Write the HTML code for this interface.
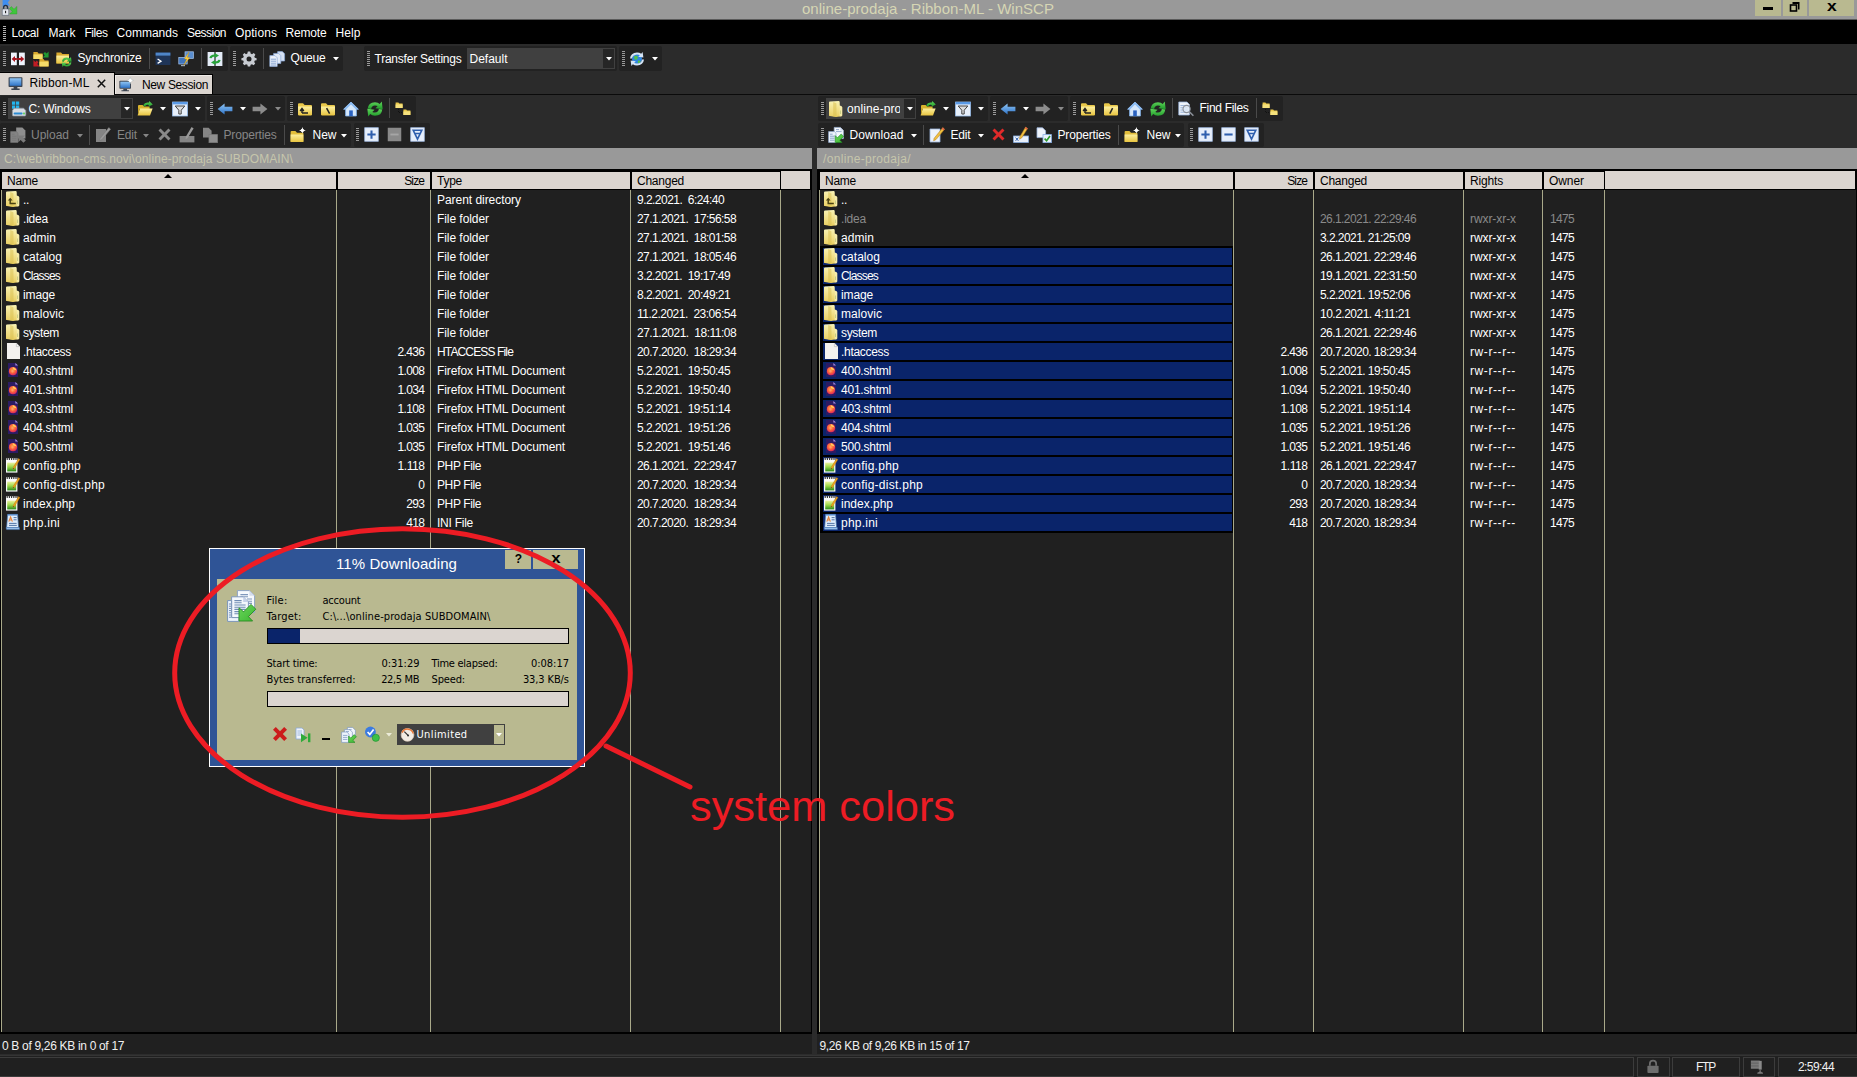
<!DOCTYPE html>
<html><head><meta charset="utf-8"><title>online-prodaja - Ribbon-ML - WinSCP</title>
<style>
html,body{margin:0;padding:0}
body{width:1857px;height:1077px;overflow:hidden;background:#2b2b2b;position:relative;font-family:"Liberation Sans",sans-serif}
body>div,body>span,body>svg{position:absolute}
.t{white-space:pre;display:block}
.ta{font-family:"DejaVu Sans Condensed","DejaVu Sans","Liberation Sans",sans-serif;font-stretch:condensed}
.i{display:block;overflow:visible}
</style></head><body>
<svg width="0" height="0" style="position:absolute"><defs><linearGradient id="gFold" x1="0" y1="0" x2="1" y2="0"><stop offset="0" stop-color="#fff6c4"/><stop offset=".55" stop-color="#f3dc7a"/><stop offset="1" stop-color="#d8b33c"/></linearGradient><linearGradient id="gFoldV" x1="0" y1="0" x2="0" y2="1"><stop offset="0" stop-color="#fdf0a0"/><stop offset="1" stop-color="#e8c440"/></linearGradient><linearGradient id="gBlue" x1="0" y1="0" x2="0" y2="1"><stop offset="0" stop-color="#8ec4f4"/><stop offset="1" stop-color="#2f74c8"/></linearGradient><linearGradient id="gGreen" x1="0" y1="0" x2="0" y2="1"><stop offset="0" stop-color="#5fd45a"/><stop offset="1" stop-color="#1f9a2a"/></linearGradient><linearGradient id="gPage" x1="0" y1="0" x2="1" y2="1"><stop offset="0" stop-color="#ffffff"/><stop offset="1" stop-color="#dfe6f0"/></linearGradient><linearGradient id="gGreenPad" x1="0" y1="0" x2="0" y2="1"><stop offset="0" stop-color="#eef4a0"/><stop offset=".5" stop-color="#9ad84a"/><stop offset="1" stop-color="#2a8a1a"/></linearGradient><linearGradient id="gFoldV2" x1="0" y1="0" x2="0" y2="1"><stop offset="0" stop-color="#f8f2b4"/><stop offset=".5" stop-color="#f1e08a"/><stop offset="1" stop-color="#e9cf62"/></linearGradient><linearGradient id="gArrow" x1="0" y1="0" x2="1" y2="1"><stop offset="0" stop-color="#6ad45a"/><stop offset="1" stop-color="#3cb832"/></linearGradient><radialGradient id="gFox" cx=".45" cy=".4" r=".6"><stop offset="0" stop-color="#ffb04a"/><stop offset=".5" stop-color="#ff6a3a"/><stop offset="1" stop-color="#d8245e"/></radialGradient></defs></svg>
<div style="left:0px;top:0px;width:1857px;height:19px;background:#999999;"></div>
<div style="left:0px;top:19px;width:1857px;height:1px;background:#5a5a5a;"></div>
<svg class="i" style="left:1.5px;top:0px;" width="16" height="16" viewBox="0 0 16 16"><path d="M.6 0 H7.8 L5.8 2.6 L7.8 5.4 H3 L.6 7Z" fill="#3f8ef0"/><path d="M7.4 8.6 L9.4 6.6 L12 9.2 L14.9 6.4 L14.9 14 L7.6 14 L10.2 11.4Z" fill="#3fc63c" stroke="#2a9a2a" stroke-width=".4"/><path d="M1.6 9.4 V7.8 Q1.6 5.4 3.6 5.4 Q5.6 5.4 5.6 7.8 V9.4" stroke="#1f2f48" stroke-width="1.4" fill="none"/><rect x=".2" y="9" width="6.6" height="6.2" fill="#e4e7ee" stroke="#5a6674" stroke-width=".6"/><rect x="3" y="10.8" width="1.1" height="2.4" fill="#222"/></svg>
<span class="t " style="top:-0.5px;font-size:15px;line-height:18px;color:#d6d6b4;letter-spacing:0.022px;left:802px;">online-prodaja - Ribbon-ML - WinSCP</span>
<div style="left:1755px;top:0px;width:26px;height:16px;background:#b9b990;"></div>
<div style="left:1783px;top:0px;width:24px;height:16px;background:#b9b990;"></div>
<div style="left:1809px;top:0px;width:45px;height:16px;background:#b9b990;"></div>
<div style="left:1763px;top:7px;width:10px;height:3px;background:#000;"></div>
<svg class="i" style="left:1789px;top:1px" width="12" height="12"><path d="M3.5 1H10.5V8.5H9V3H3.5Z" fill="#000"/><rect x="1.5" y="4" width="6" height="6" fill="none" stroke="#000" stroke-width="1.6"/></svg>
<span class="t b" style="top:-3px;font-size:14px;line-height:18px;color:#000;left:1828px;font-weight:bold;transform:scaleX(1.25);">x</span>
<div style="left:0px;top:20px;width:1857px;height:24px;background:#000;"></div>
<div style="left:3px;top:26px;width:3px;height:15px;background:repeating-linear-gradient(to bottom,#b0b0b0 0 1px,transparent 1px 2px)"></div>
<span class="t " style="top:24.5px;font-size:12px;line-height:16px;color:#ffffff;letter-spacing:-0.338px;left:11.5px;">Local</span>
<span class="t " style="top:24.5px;font-size:12px;line-height:16px;color:#ffffff;letter-spacing:0.082px;left:48.5px;">Mark</span>
<span class="t " style="top:24.5px;font-size:12px;line-height:16px;color:#ffffff;letter-spacing:-0.469px;left:84.5px;">Files</span>
<span class="t " style="top:24.5px;font-size:12px;line-height:16px;color:#ffffff;letter-spacing:0.018px;left:116.5px;">Commands</span>
<span class="t " style="top:24.5px;font-size:12px;line-height:16px;color:#ffffff;letter-spacing:-0.527px;left:187px;">Session</span>
<span class="t " style="top:24.5px;font-size:12px;line-height:16px;color:#ffffff;letter-spacing:0.094px;left:235px;">Options</span>
<span class="t " style="top:24.5px;font-size:12px;line-height:16px;color:#ffffff;letter-spacing:-0.169px;left:285.5px;">Remote</span>
<span class="t " style="top:24.5px;font-size:12px;line-height:16px;color:#ffffff;letter-spacing:0.078px;left:335.5px;">Help</span>
<div style="left:0px;top:46px;width:228px;height:25px;background:#222222;border-radius:2px;"></div>
<div style="left:230px;top:46px;width:112.5px;height:25px;background:#222222;border-radius:2px;"></div>
<div style="left:364px;top:46px;width:252.5px;height:25px;background:#222222;border-radius:2px;"></div>
<div style="left:619px;top:46px;width:43px;height:25px;background:#222222;border-radius:2px;"></div>
<div style="left:3px;top:51px;width:3px;height:15px;background:repeating-linear-gradient(to bottom,#9a9a9a 0 1px,transparent 1px 2px)"></div>
<svg class="i" style="left:10px;top:50.5px;" width="16" height="16" viewBox="0 0 16 16"><rect x="1" y="1.6" width="5.8" height="12.6" fill="#eef4fd"/><rect x="9" y="1.6" width="5.8" height="12.6" fill="#eef4fd"/><path d="M1.6 8 L5 5 V7 H6.8 V9 H5 V11Z M14.2 8 L10.8 5 V7 H9 V9 H10.8 V11Z" fill="#a8141e"/><rect x="6.8" y="7.2" width="2.2" height="1.6" fill="#a8141e"/></svg>
<svg class="i" style="left:33px;top:50.5px;" width="16" height="16" viewBox="0 0 16 16"><path d="M.4 1 H4.4 L5.6 2.4 H9.6 V8 H.4Z" fill="#d9a92e"/><path d="M.4 3.4 H9.6 V8 H.4Z" fill="#f5dc6a"/><path d="M6.4 8 H10.4 L11.6 9.4 H15.6 V15.4 H6.4Z" fill="#d9a92e"/><path d="M6.4 10.6 H15.6 V15.4 H6.4Z" fill="#f5dc6a"/><path d="M10.4 2.6 L12 1 L13.6 2.6 L15.6 .6 V6.6 H9.6 L11.8 4.4Z" fill="#1f9a32"/><path d="M5.4 11.2 L3.8 9.6 L2.4 11 L.4 9 V15.4 H6.6 L4.2 13Z" fill="#c01c24"/></svg>
<svg class="i" style="left:56px;top:50.5px;" width="16" height="16" viewBox="0 0 16 16"><path d="M.4 1.4 H5 L6.4 3 H13 V12.4 H.4Z" fill="#d9a92e"/><path d="M.4 4.6 H13 V12.4 H.4Z" fill="url(#gFoldV)"/><path d="M6 10.6 Q6.4 6.8 10.6 6.6 Q12.6 6.6 13.6 7.6 L15 6 L15.6 10.8 L10.8 10.4 L12.2 9 Q11.6 8.4 10.6 8.4 Q8.2 8.6 7.8 10.8Z" fill="url(#gGreen)"/><path d="M15.4 11.4 Q14.8 15.4 10.8 15.6 Q8.8 15.6 7.8 14.6 L6.4 16 L5.8 11.4 L10.6 11.8 L9.2 13.2 Q9.8 13.8 10.8 13.8 Q13.2 13.6 13.6 11.4Z" fill="url(#gGreen)"/></svg>
<span class="t " style="top:50px;font-size:12px;line-height:16px;color:#fff;letter-spacing:-0.185px;left:77.5px;">Synchronize</span>
<div style="left:149px;top:48px;width:1px;height:21px;background:#4a4a4a;"></div>
<svg class="i" style="left:155px;top:50.5px;" width="16" height="16" viewBox="0 0 16 16"><rect x=".6" y="1.6" width="14.8" height="12.4" fill="#1f3558"/><rect x=".6" y="1.6" width="14.8" height="3" fill="#4f86c8"/><path d="M2.6 8 L6 10.2 L2.6 12.4" stroke="#fff" stroke-width="1.3" fill="none"/></svg>
<svg class="i" style="left:178px;top:50.5px;" width="16" height="16" viewBox="0 0 16 16"><rect x="7" y=".8" width="8.4" height="6.6" fill="#5a8ed0" stroke="#a8c8f0" stroke-width=".7"/><rect x=".8" y="6.4" width="8.4" height="6.6" fill="#3f74bc" stroke="#a8c8f0" stroke-width=".7"/><path d="M3 14.6 H7" stroke="#9ab" stroke-width="1.2"/><path d="M11 1 L6.4 8 H8.8 L5.6 14.4 L11.8 6.6 H9.2Z" fill="#ffd23a" stroke="#c88a10" stroke-width=".4"/></svg>
<div style="left:201px;top:48px;width:1px;height:21px;background:#4a4a4a;"></div>
<svg class="i" style="left:207px;top:50.5px;" width="16" height="16" viewBox="0 0 16 16"><rect x=".6" y="1" width="14.8" height="14" fill="#e4ecf8"/><rect x="7.4" y="1" width="1.2" height="14" fill="#2c2c2c"/><path d="M2.4 7 Q3 3.4 7.6 3.4 L7.4 2 L12 4.4 L8 7 L7.8 5.4 Q5 5.4 4.6 7.2Z" fill="#27a43a"/><path d="M13.6 9 Q13 12.6 8.4 12.6 L8.6 14 L4 11.6 L8 9 L8.2 10.6 Q11 10.6 11.4 8.8Z" fill="#27a43a"/></svg>
<div style="left:233px;top:51px;width:3px;height:15px;background:repeating-linear-gradient(to bottom,#9a9a9a 0 1px,transparent 1px 2px)"></div>
<svg class="i" style="left:240.5px;top:50.5px;" width="16" height="16" viewBox="0 0 16 16"><path d="M6.8 .6 H9.2 L9.6 2.6 L11 3.2 L12.8 2.1 L14.4 3.8 L13.3 5.4 L13.8 6.8 L15.6 7.2 V9.2 L13.8 9.6 L13.2 11 L14.2 12.6 L12.6 14.2 L11 13.2 L9.6 13.8 L9.2 15.6 H6.8 L6.4 13.8 L5 13.2 L3.4 14.2 L1.8 12.6 L2.8 11 L2.2 9.6 L.4 9.2 V7.2 L2.2 6.8 L2.8 5.4 L1.8 3.8 L3.4 2.1 L5 3.2 L6.4 2.6Z" fill="#c8ccd2"/><circle cx="8" cy="8.1" r="2.5" fill="#232323"/></svg>
<div style="left:263px;top:48px;width:1px;height:21px;background:#4a4a4a;"></div>
<svg class="i" style="left:269px;top:50.5px;" width="16" height="16" viewBox="0 0 16 16"><path d="M8.6 .6 H13.4 L15.6 2.8 V10 H8.6Z" fill="#d6e2f4" stroke="#8aa8d8" stroke-width=".7"/><path d="M4.6 2.4 H9.6 L11.8 4.6 V12.4 H4.6Z" fill="#e2ebf8" stroke="#8aa8d8" stroke-width=".7"/><path d="M.8 4.6 H6 L8.2 6.8 V15.4 H.8Z" fill="#eef3fb" stroke="#8aa8d8" stroke-width=".7"/><path d="M2 8.2 H7 M2 10.2 H7 M2 12.2 H7 M2 14 H7" stroke="#7a9ccc" stroke-width=".9"/></svg>
<span class="t " style="top:50px;font-size:12px;line-height:16px;color:#fff;letter-spacing:-0.203px;left:290.5px;">Queue</span>
<svg class="i" style="left:332.5px;top:56.8px" width="6" height="3.4"><path d="M0 0H6L3 3.4Z" fill="#fff"/></svg>
<div style="left:367px;top:51px;width:3px;height:15px;background:repeating-linear-gradient(to bottom,#9a9a9a 0 1px,transparent 1px 2px)"></div>
<span class="t " style="top:50.5px;font-size:12px;line-height:16px;color:#fff;letter-spacing:-0.230px;left:374.5px;">Transfer Settings</span>
<div style="left:467px;top:48px;width:148px;height:21px;background:#404040;"></div>
<div style="left:603px;top:49px;width:11px;height:19px;background:#262626;"></div>
<span class="t " style="top:50.5px;font-size:12px;line-height:16px;color:#fff;left:469.5px;">Default</span>
<svg class="i" style="left:605.5px;top:56.8px" width="6" height="3.4"><path d="M0 0H6L3 3.4Z" fill="#fff"/></svg>
<div style="left:622px;top:51px;width:3px;height:15px;background:repeating-linear-gradient(to bottom,#9a9a9a 0 1px,transparent 1px 2px)"></div>
<svg class="i" style="left:629px;top:50.5px;" width="16" height="16" viewBox="0 0 16 16"><circle cx="8" cy="8" r="5" fill="#2f86e0"/><path d="M5 5.4 Q7 4 8.6 5.4 Q9.4 7 8 8.2 Q6.4 9.4 5.4 8 Z M9 9.6 Q11 9 11.6 10.4 Q10.4 12.4 8.8 12Z" fill="#52c24a"/><path d="M1 7.4 Q1.6 1.8 8 1.4 Q10.6 1.4 12.2 2.8 L13.6 1 L14.4 6.4 L9.2 5.8 L10.8 4.2 Q9.6 3.4 8 3.4 Q3.6 3.8 3 7.6Z" fill="#d4e4f6"/><path d="M15 8.6 Q14.4 14.2 8 14.6 Q5.4 14.6 3.8 13.2 L2.4 15 L1.6 9.6 L6.8 10.2 L5.2 11.8 Q6.4 12.6 8 12.6 Q12.4 12.2 13 8.4Z" fill="#d4e4f6"/></svg>
<svg class="i" style="left:651.5px;top:56.8px" width="6" height="3.4"><path d="M0 0H6L3 3.4Z" fill="#fff"/></svg>
<div style="left:0px;top:72px;width:115px;height:23px;background:#000;"></div>
<div style="left:0px;top:73px;width:114px;height:22px;background:#dbd5d0;"></div>
<div style="left:115px;top:74px;width:98px;height:20px;background:#000;"></div>
<div style="left:115px;top:75px;width:97px;height:19px;background:#dbd5d0;box-shadow:inset 1px 1px 0 #efebe8;"></div>
<div style="left:114px;top:94px;width:1743px;height:1px;background:#0a0a0a;"></div>
<svg class="i" style="left:8px;top:76px;" width="15" height="15" viewBox="0 0 16 16"><rect x=".6" y="1.2" width="14.8" height="10.4" rx=".8" fill="#3c4450"/><rect x="1.8" y="2.4" width="12.4" height="8" fill="url(#gBlue)"/><path d="M6 11.6 H10 V13.4 H12.4 V14.8 H3.6 V13.4 H6Z" fill="#3c4450"/></svg>
<span class="t " style="top:75px;font-size:12px;line-height:16px;color:#000;letter-spacing:0.144px;left:29.5px;">Ribbon-ML</span>
<svg class="i" style="left:97px;top:79px" width="9" height="9"><path d="M.8 .8L8.2 8.2M8.2 .8L.8 8.2" stroke="#111" stroke-width="1.5"/></svg>
<svg class="i" style="left:119px;top:77px;" width="15" height="15" viewBox="0 0 16 16"><rect x=".4" y="4" width="12.4" height="8.6" rx=".8" fill="#3c4450"/><rect x="1.4" y="5" width="10.4" height="6.6" fill="url(#gBlue)"/><path d="M4.6 12.6 H8.6 V14 H10.6 V15.2 H2.6 V14 H4.6Z" fill="#3c4450"/><path d="M12 0 L12.9 2.6 L15.8 3.6 L12.9 4.6 L12 7.4 L11.1 4.6 L8.2 3.6 L11.1 2.6Z" fill="#f4f6f8" stroke="#9aa" stroke-width=".3"/><circle cx="12" cy="3.7" r="1.7" fill="#fff"/></svg>
<span class="t " style="top:76.5px;font-size:12px;line-height:16px;color:#000;letter-spacing:-0.366px;left:142px;">New Session</span>
<div style="left:0px;top:96px;width:205px;height:24.5px;background:#222222;border-radius:2px;"></div>
<div style="left:207px;top:96px;width:77.5px;height:24.5px;background:#222222;border-radius:2px;"></div>
<div style="left:287px;top:96px;width:129px;height:24.5px;background:#222222;border-radius:2px;"></div>
<div style="left:3px;top:101.5px;width:3px;height:14px;background:repeating-linear-gradient(to bottom,#9a9a9a 0 1px,transparent 1px 2px)"></div>
<div style="left:8px;top:98px;width:124.5px;height:20.5px;background:#404040;"></div>
<div style="left:121px;top:99px;width:10.5px;height:18.5px;background:#262626;"></div>
<svg class="i" style="left:10.5px;top:100.5px;" width="16" height="16" viewBox="0 0 16 16"><path d="M1 .6 H4.2 V3.8 H1Z M5 .6 H8.2 V3.8 H5Z M1 4.6 H4.2 V7.8 H1Z M5 4.6 H8.2 V7.8 H5Z" fill="#22b4ee"/><path d="M1.4 9.6 L3 7.2 H12.6 L14.8 9.6 V14 Q14.8 15 13.8 15 H2.4 Q1.4 15 1.4 14Z" fill="#d8dde4" stroke="#8a939e" stroke-width=".7"/><rect x="2.6" y="11.4" width="9" height="2.2" rx="1" fill="#2a8ad0"/><rect x="12.2" y="11.6" width="1.6" height="1.8" fill="#4fd24a"/></svg>
<span class="t " style="top:101px;font-size:12px;line-height:16px;color:#fff;letter-spacing:-0.202px;left:28.5px;">C: Windows</span>
<svg class="i" style="left:123.5px;top:106.8px" width="6" height="3.4"><path d="M0 0H6L3 3.4Z" fill="#fff"/></svg>
<svg class="i" style="left:137px;top:100.5px;" width="16" height="16" viewBox="0 0 16 16"><path d="M1 5 Q1 4 2 4 H5.6 L7 5.6 H12.6 V8 H1Z" fill="#d9b42e"/><path d="M.6 14.4 L2.8 7.4 H15.6 L13 14.4Z" fill="url(#gFoldV)"/><path d="M1 7 V14 L2.8 7.4Z" fill="#c9a426"/><path d="M6 4.4 Q8 .6 12 1.6 L12.2 0 L15.8 3.4 L11.6 5.8 L11.8 4 Q9 3.2 8 5.4Z" fill="url(#gGreen)"/></svg>
<svg class="i" style="left:159.5px;top:106.8px" width="6" height="3.4"><path d="M0 0H6L3 3.4Z" fill="#fff"/></svg>
<svg class="i" style="left:172px;top:100.5px;" width="16" height="16" viewBox="0 0 16 16"><rect x=".6" y="1" width="14.8" height="14" fill="#e8f0fb" stroke="#9cc0ee" stroke-width=".8"/><rect x=".6" y="1" width="14.8" height="2.4" fill="#5a9ae6"/><path d="M3.2 5 H12.8 L9.2 9.2 V13 L6.8 13 V9.2Z" fill="#dcdcdc" stroke="#444" stroke-width="1"/></svg>
<svg class="i" style="left:194.5px;top:106.8px" width="6" height="3.4"><path d="M0 0H6L3 3.4Z" fill="#fff"/></svg>
<div style="left:210px;top:101.5px;width:3px;height:14px;background:repeating-linear-gradient(to bottom,#9a9a9a 0 1px,transparent 1px 2px)"></div>
<svg class="i" style="left:217px;top:100.5px;" width="16" height="16" viewBox="0 0 16 16"><path d="M.6 8 L7.6 2.4 V5.8 H15.4 V10.2 H7.6 V13.6Z" fill="url(#gBlue)"/></svg>
<svg class="i" style="left:239.5px;top:106.8px" width="6" height="3.4"><path d="M0 0H6L3 3.4Z" fill="#fff"/></svg>
<svg class="i" style="left:252px;top:100.5px;" width="16" height="16" viewBox="0 0 16 16"><path d="M15.4 8 L8.4 2.4 V5.8 H.6 V10.2 H8.4 V13.6Z" fill="#8c8c8c"/></svg>
<svg class="i" style="left:274.5px;top:106.8px" width="6" height="3.4"><path d="M0 0H6L3 3.4Z" fill="#8a8a8a"/></svg>
<div style="left:290px;top:101.5px;width:3px;height:14px;background:repeating-linear-gradient(to bottom,#9a9a9a 0 1px,transparent 1px 2px)"></div>
<svg class="i" style="left:297px;top:100.5px;" width="16" height="16" viewBox="0 0 16 16"><path d="M1 3.2 Q1 2.2 2 2.2 H6 L7.6 4 H14 Q15 4 15 5 V13.5 H1Z" fill="#e9c84a"/><path d="M1 5.6 H15 V13.6 Q15 14.4 14.2 14.4 H1.8 Q1 14.4 1 13.6Z" fill="url(#gFoldV)"/><path d="M5 12 H11 M5 12 V8.4 M3.2 10 L5 7.6 L6.8 10" stroke="#222" stroke-width="1.5" fill="none"/></svg>
<svg class="i" style="left:320px;top:100.5px;" width="16" height="16" viewBox="0 0 16 16"><path d="M1 3.2 Q1 2.2 2 2.2 H6 L7.6 4 H14 Q15 4 15 5 V13.5 H1Z" fill="#e9c84a"/><path d="M1 5.6 H15 V13.6 Q15 14.4 14.2 14.4 H1.8 Q1 14.4 1 13.6Z" fill="url(#gFoldV)"/><path d="M6.6 7.2 L9.6 12.6" stroke="#222" stroke-width="1.5"/></svg>
<svg class="i" style="left:343px;top:100.5px;" width="16" height="16" viewBox="0 0 16 16"><path d="M8 1 L15.4 8.2 H13.4 V15 H2.6 V8.2 H.6Z" fill="#d6e8fb" stroke="#7fb0ea" stroke-width=".8"/><path d="M8 1 L15.4 8.2 H12.8 L8 3.6 L3.2 8.2 H.6Z" fill="#8cbcf2"/><rect x="6.2" y="9.4" width="3.6" height="5.6" fill="#2a62c0"/></svg>
<svg class="i" style="left:367px;top:100.5px;" width="16" height="16" viewBox="0 0 16 16"><g transform="translate(8 8) scale(1.13) translate(-8 -8)"><path d="M1.6 7.6 Q2 2.2 8 2 Q10.8 2 12.2 3.6 L14 1.4 L14.8 8.2 L8.4 7.4 L10.4 5.4 Q9.4 4.8 8 4.8 Q5 5 4.6 8Z" fill="url(#gGreen)"/><path d="M14.4 8.4 Q14 13.8 8 14 Q5.2 14 3.8 12.4 L2 14.6 L1.2 7.8 L7.6 8.6 L5.6 10.6 Q6.6 11.2 8 11.2 Q11 11 11.4 8Z" fill="url(#gGreen)"/></g></svg>
<div style="left:389px;top:98px;width:1px;height:20px;background:#4a4a4a;"></div>
<svg class="i" style="left:395px;top:100.5px;" width="16" height="16" viewBox="0 0 16 16"><path d="M3.5 6 V11.5 H8" stroke="#111" stroke-width="1" stroke-dasharray="1 1" fill="none"/><path d="M.6 1.6 H3.4 L4.2 2.6 H7.6 V7 H.6Z" fill="#ecc94a"/><path d="M.6 3.4 H7.6 V7 H.6Z" fill="#f6e27e"/><path d="M8.4 8.6 H11.2 L12 9.6 H15.4 V14 H8.4Z" fill="#ecc94a"/><path d="M8.4 10.4 H15.4 V14 H8.4Z" fill="#f6e27e"/></svg>
<div style="left:0px;top:123px;width:350.5px;height:24px;background:#222222;border-radius:2px;"></div>
<div style="left:353.5px;top:123px;width:76.5px;height:24px;background:#222222;border-radius:2px;"></div>
<div style="left:3px;top:127.5px;width:3px;height:14px;background:repeating-linear-gradient(to bottom,#9a9a9a 0 1px,transparent 1px 2px)"></div>
<svg class="i" style="left:10px;top:127px;" width="16" height="16" viewBox="0 0 16 16"><path d="M6.2 .4 H12.4 L15.4 3.4 V11.6 H6.2Z" fill="#8e8e8e"/><path d="M.6 4.6 H6.4 L8 6.2 V15.4 H.6Z" fill="#848484" stroke="#747474" stroke-width=".6"/><path d="M2 7.2 H4.6 M2 9.2 H6.6 M2 11.2 H6.6 M2 13.2 H6.6" stroke="#767676" stroke-width=".9"/><path d="M8.4 15.2 V8.4 H15.2 L13 10.6 L15.8 13.4 L13.4 15.8 L10.6 13Z" fill="#7c7c7c"/></svg>
<span class="t " style="top:127px;font-size:12px;line-height:16px;color:#868686;letter-spacing:-0.005px;left:31px;">Upload</span>
<svg class="i" style="left:76.5px;top:133.8px" width="6" height="3.4"><path d="M0 0H6L3 3.4Z" fill="#868686"/></svg>
<div style="left:89px;top:125px;width:1px;height:20px;background:#4a4a4a;"></div>
<svg class="i" style="left:95px;top:127px;" width="16" height="16" viewBox="0 0 16 16"><path d="M1 2 H11 V15 H1Z" fill="#858585"/><path d="M13.8 .6 L15.6 2.2 L7 12.6 L4.6 13.8 L5.2 11.2Z" fill="#9a9a9a" stroke="#777" stroke-width=".5"/></svg>
<span class="t " style="top:127px;font-size:12px;line-height:16px;color:#868686;letter-spacing:-0.168px;left:117px;">Edit</span>
<svg class="i" style="left:143px;top:133.8px" width="6" height="3.4"><path d="M0 0H6L3 3.4Z" fill="#868686"/></svg>
<svg class="i" style="left:156.5px;top:127px;" width="15" height="15" viewBox="0 0 16 16"><path d="M1.6 3.8 L3.8 1.6 L8 5.8 L12.2 1.6 L14.4 3.8 L10.2 8 L14.4 12.2 L12.2 14.4 L8 10.2 L3.8 14.4 L1.6 12.2 L5.8 8Z" fill="#8a8a8a"/></svg>
<svg class="i" style="left:179px;top:127px;" width="16" height="16" viewBox="0 0 16 16"><rect x=".6" y="9" width="14.8" height="6.4" fill="#858585"/><path d="M12.6 0 L14.6 1.6 L8.6 11 L6.6 12.2 L6.8 9.8Z" fill="#9a9a9a"/></svg>
<svg class="i" style="left:202px;top:127px;" width="16" height="16" viewBox="0 0 16 16"><path d="M1 .8 H6.6 L9.6 3.8 V10.6 H1Z" fill="#858585"/><rect x="7" y="7.6" width="8.4" height="8" fill="#8f8f8f" stroke="#7a7a7a" stroke-width=".8"/></svg>
<span class="t " style="top:127px;font-size:12px;line-height:16px;color:#868686;letter-spacing:-0.169px;left:223.5px;">Properties</span>
<div style="left:284px;top:125px;width:1px;height:20px;background:#4a4a4a;"></div>
<svg class="i" style="left:290px;top:127px;" width="16" height="16" viewBox="0 0 16 16"><path d="M.6 5 Q.6 4 1.6 4 H5.4 L7 5.8 H13.4 V15 H.6Z" fill="#e2bd3a"/><path d="M.6 7.4 H13.4 V14.2 Q13.4 15 12.6 15 H1.4 Q.6 15 .6 14.2Z" fill="url(#gFoldV)"/><path d="M12.4 0 L13.2 2.6 L15.8 3.4 L13.2 4.2 L12.4 6.8 L11.6 4.2 L9 3.4 L11.6 2.6Z" fill="#ffffff"/><circle cx="12.4" cy="3.4" r="1.6" fill="#fff"/></svg>
<span class="t " style="top:127px;font-size:12px;line-height:16px;color:#fff;letter-spacing:-0.005px;left:312.5px;">New</span>
<svg class="i" style="left:340.5px;top:133.8px" width="6" height="3.4"><path d="M0 0H6L3 3.4Z" fill="#fff"/></svg>
<div style="left:356px;top:127.5px;width:3px;height:14px;background:repeating-linear-gradient(to bottom,#9a9a9a 0 1px,transparent 1px 2px)"></div>
<svg class="i" style="left:363.5px;top:127px;" width="15" height="15" viewBox="0 0 16 16"><rect x=".8" y=".8" width="14.4" height="14.4" fill="#e6eefb" stroke="#a8c4ee" stroke-width=".8"/><path d="M8 3.6 V12.4 M3.6 8 H12.4" stroke="#2f5fae" stroke-width="2.2"/></svg>
<svg class="i" style="left:386.5px;top:127px;" width="15" height="15" viewBox="0 0 16 16"><rect x=".8" y=".8" width="14.4" height="14.4" fill="#8a8a8a"/><path d="M3.6 8 H12.4" stroke="#a6a6a6" stroke-width="2"/></svg>
<svg class="i" style="left:409.5px;top:127px;" width="15" height="15" viewBox="0 0 16 16"><rect x=".8" y=".8" width="14.4" height="14.4" fill="#e6eefb" stroke="#a8c4ee" stroke-width=".8"/><path d="M3.4 3.4 H12.6 L8 13Z M5.4 7 H10.6" fill="none" stroke="#2f5fae" stroke-width="1.7"/></svg>
<div style="left:818px;top:96px;width:169.5px;height:24.5px;background:#222222;border-radius:2px;"></div>
<div style="left:990px;top:96px;width:77.5px;height:24.5px;background:#222222;border-radius:2px;"></div>
<div style="left:1070px;top:96px;width:212.5px;height:24.5px;background:#222222;border-radius:2px;"></div>
<div style="left:821px;top:101.5px;width:3px;height:14px;background:repeating-linear-gradient(to bottom,#9a9a9a 0 1px,transparent 1px 2px)"></div>
<div style="left:826px;top:98px;width:90px;height:20.5px;background:#404040;"></div>
<div style="left:904px;top:99px;width:11px;height:18.5px;background:#262626;"></div>
<svg class="i" style="left:828px;top:100.5px;" width="16" height="16" viewBox="0 0 16 16"><path d="M1 1.6 Q1 .6 2 .5 L10.6 .1 Q11.7 .1 11.7 1.2 L11.8 4.6 L13.7 5.5 Q14.2 5.8 14.2 6.6 L14.2 14.2 Q14.2 15 13.4 15.2 L8 16 L1.8 15.1 Q1 15 1 14.2 Z" fill="url(#gFoldV2)"/><path d="M5.2 1 L8.4 2.2 L8.6 15.9 L8 16 L5.2 15.6Z" fill="#d9c050" opacity=".55"/><path d="M11.8 4.6 L13.7 5.5 Q14.2 5.8 14.2 6.6 L14.2 14.2 Q14.2 15 13.4 15.2 L11.6 15.5Z" fill="#f7efb4" opacity=".8"/><path d="M12.4 9.5 V13" stroke="#7aa04a" stroke-width=".6" opacity=".7"/></svg>
<span class="t" style="left:847px;top:101px;width:53px;overflow:hidden;font-size:12px;line-height:16px;color:#fff;letter-spacing:.1px">online-prodaja</span>
<svg class="i" style="left:906.5px;top:106.8px" width="6" height="3.4"><path d="M0 0H6L3 3.4Z" fill="#fff"/></svg>
<svg class="i" style="left:920px;top:100.5px;" width="16" height="16" viewBox="0 0 16 16"><path d="M1 5 Q1 4 2 4 H5.6 L7 5.6 H12.6 V8 H1Z" fill="#d9b42e"/><path d="M.6 14.4 L2.8 7.4 H15.6 L13 14.4Z" fill="url(#gFoldV)"/><path d="M1 7 V14 L2.8 7.4Z" fill="#c9a426"/><path d="M6 4.4 Q8 .6 12 1.6 L12.2 0 L15.8 3.4 L11.6 5.8 L11.8 4 Q9 3.2 8 5.4Z" fill="url(#gGreen)"/></svg>
<svg class="i" style="left:942.5px;top:106.8px" width="6" height="3.4"><path d="M0 0H6L3 3.4Z" fill="#fff"/></svg>
<svg class="i" style="left:955px;top:100.5px;" width="16" height="16" viewBox="0 0 16 16"><rect x=".6" y="1" width="14.8" height="14" fill="#e8f0fb" stroke="#9cc0ee" stroke-width=".8"/><rect x=".6" y="1" width="14.8" height="2.4" fill="#5a9ae6"/><path d="M3.2 5 H12.8 L9.2 9.2 V13 L6.8 13 V9.2Z" fill="#dcdcdc" stroke="#444" stroke-width="1"/></svg>
<svg class="i" style="left:977.5px;top:106.8px" width="6" height="3.4"><path d="M0 0H6L3 3.4Z" fill="#fff"/></svg>
<div style="left:993px;top:101.5px;width:3px;height:14px;background:repeating-linear-gradient(to bottom,#9a9a9a 0 1px,transparent 1px 2px)"></div>
<svg class="i" style="left:1000px;top:100.5px;" width="16" height="16" viewBox="0 0 16 16"><path d="M.6 8 L7.6 2.4 V5.8 H15.4 V10.2 H7.6 V13.6Z" fill="url(#gBlue)"/></svg>
<svg class="i" style="left:1022.5px;top:106.8px" width="6" height="3.4"><path d="M0 0H6L3 3.4Z" fill="#fff"/></svg>
<svg class="i" style="left:1035px;top:100.5px;" width="16" height="16" viewBox="0 0 16 16"><path d="M15.4 8 L8.4 2.4 V5.8 H.6 V10.2 H8.4 V13.6Z" fill="#8c8c8c"/></svg>
<svg class="i" style="left:1057.5px;top:106.8px" width="6" height="3.4"><path d="M0 0H6L3 3.4Z" fill="#8a8a8a"/></svg>
<div style="left:1073px;top:101.5px;width:3px;height:14px;background:repeating-linear-gradient(to bottom,#9a9a9a 0 1px,transparent 1px 2px)"></div>
<svg class="i" style="left:1080px;top:100.5px;" width="16" height="16" viewBox="0 0 16 16"><path d="M1 3.2 Q1 2.2 2 2.2 H6 L7.6 4 H14 Q15 4 15 5 V13.5 H1Z" fill="#e9c84a"/><path d="M1 5.6 H15 V13.6 Q15 14.4 14.2 14.4 H1.8 Q1 14.4 1 13.6Z" fill="url(#gFoldV)"/><path d="M5 12 H11 M5 12 V8.4 M3.2 10 L5 7.6 L6.8 10" stroke="#222" stroke-width="1.5" fill="none"/></svg>
<svg class="i" style="left:1103px;top:100.5px;" width="16" height="16" viewBox="0 0 16 16"><path d="M1 3.2 Q1 2.2 2 2.2 H6 L7.6 4 H14 Q15 4 15 5 V13.5 H1Z" fill="#e9c84a"/><path d="M1 5.6 H15 V13.6 Q15 14.4 14.2 14.4 H1.8 Q1 14.4 1 13.6Z" fill="url(#gFoldV)"/><path d="M9.6 7.2 L6.8 12.6" stroke="#222" stroke-width="1.5"/></svg>
<svg class="i" style="left:1126.5px;top:100.5px;" width="16" height="16" viewBox="0 0 16 16"><path d="M8 1 L15.4 8.2 H13.4 V15 H2.6 V8.2 H.6Z" fill="#d6e8fb" stroke="#7fb0ea" stroke-width=".8"/><path d="M8 1 L15.4 8.2 H12.8 L8 3.6 L3.2 8.2 H.6Z" fill="#8cbcf2"/><rect x="6.2" y="9.4" width="3.6" height="5.6" fill="#2a62c0"/></svg>
<svg class="i" style="left:1150px;top:100.5px;" width="16" height="16" viewBox="0 0 16 16"><g transform="translate(8 8) scale(1.13) translate(-8 -8)"><path d="M1.6 7.6 Q2 2.2 8 2 Q10.8 2 12.2 3.6 L14 1.4 L14.8 8.2 L8.4 7.4 L10.4 5.4 Q9.4 4.8 8 4.8 Q5 5 4.6 8Z" fill="url(#gGreen)"/><path d="M14.4 8.4 Q14 13.8 8 14 Q5.2 14 3.8 12.4 L2 14.6 L1.2 7.8 L7.6 8.6 L5.6 10.6 Q6.6 11.2 8 11.2 Q11 11 11.4 8Z" fill="url(#gGreen)"/></g></svg>
<div style="left:1172px;top:98px;width:1px;height:20px;background:#4a4a4a;"></div>
<svg class="i" style="left:1178px;top:100.5px;" width="16" height="16" viewBox="0 0 16 16"><path d="M.8 1 H9 L11.4 3.4 V14 H.8Z" fill="#eef3fb" stroke="#9ab4dc" stroke-width=".8"/><path d="M2.4 4.6 H9.6 M2.4 6.8 H9.6 M2.4 9 H9.6 M2.4 11.2 H8" stroke="#8aa8d4" stroke-width=".9"/><circle cx="8.6" cy="8" r="3.6" fill="#dfeaf8" fill-opacity=".8" stroke="#8a8f98" stroke-width="1.1"/><path d="M11.4 10.8 L15.4 14.8" stroke="#8a8f98" stroke-width="1.6"/></svg>
<span class="t " style="top:100px;font-size:12px;line-height:16px;color:#fff;letter-spacing:-0.302px;left:1199.5px;">Find Files</span>
<div style="left:1256px;top:98px;width:1px;height:20px;background:#4a4a4a;"></div>
<svg class="i" style="left:1262px;top:100.5px;" width="16" height="16" viewBox="0 0 16 16"><path d="M3.5 6 V11.5 H8" stroke="#111" stroke-width="1" stroke-dasharray="1 1" fill="none"/><path d="M.6 1.6 H3.4 L4.2 2.6 H7.6 V7 H.6Z" fill="#ecc94a"/><path d="M.6 3.4 H7.6 V7 H.6Z" fill="#f6e27e"/><path d="M8.4 8.6 H11.2 L12 9.6 H15.4 V14 H8.4Z" fill="#ecc94a"/><path d="M8.4 10.4 H15.4 V14 H8.4Z" fill="#f6e27e"/></svg>
<div style="left:818px;top:123px;width:366px;height:24px;background:#222222;border-radius:2px;"></div>
<div style="left:1187.5px;top:123px;width:76.5px;height:24px;background:#222222;border-radius:2px;"></div>
<div style="left:821px;top:127.5px;width:3px;height:14px;background:repeating-linear-gradient(to bottom,#9a9a9a 0 1px,transparent 1px 2px)"></div>
<svg class="i" style="left:828px;top:127px;" width="16" height="16" viewBox="0 0 16 16"><path d="M6.2 .4 H12.4 L15.4 3.4 V11.6 H6.2Z" fill="#f4f8fd" stroke="#a4b8d8" stroke-width=".7"/><path d="M12.4 .4 V3.4 H15.4Z" fill="#cfd9ec"/><path d="M8 2.6 H11 M8 4.6 H13.6" stroke="#8aa2c8" stroke-width=".9"/><path d="M.6 4.6 H6.4 L8 6.2 V15.4 H.6Z" fill="#eef4fc" stroke="#8ea6cc" stroke-width=".7"/><path d="M2 7.2 H4.6 M2 9.2 H6.6 M2 11.2 H6.6 M2 13.2 H6.6" stroke="#7f9ac4" stroke-width=".9"/><path d="M7.2 8.6 L7.2 15.4 L14 15.4 L11.8 13.2 L15.6 9.4 L13.2 7 L9.4 10.8Z" fill="url(#gArrow)" stroke="#1f8a22" stroke-width=".6" stroke-linejoin="round"/></svg>
<span class="t " style="top:127px;font-size:12px;line-height:16px;color:#fff;letter-spacing:0.078px;left:849.5px;">Download</span>
<svg class="i" style="left:910.5px;top:133.8px" width="6" height="3.4"><path d="M0 0H6L3 3.4Z" fill="#fff"/></svg>
<div style="left:923px;top:125px;width:1px;height:20px;background:#4a4a4a;"></div>
<svg class="i" style="left:928.5px;top:127px;" width="16" height="16" viewBox="0 0 16 16"><path d="M1 2 H11 V15 H1Z" fill="#eef3fb" stroke="#9ab4dc" stroke-width=".8"/><path d="M13.8 .6 L15.6 2.2 L7 12.6 L4.6 13.8 L5.2 11.2Z" fill="#f0c040" stroke="#b07818" stroke-width=".5"/><path d="M13.8 .6 L15.6 2.2 L14.6 3.4 L12.8 1.8Z" fill="#e0584a"/></svg>
<span class="t " style="top:127px;font-size:12px;line-height:16px;color:#fff;letter-spacing:-0.168px;left:950.5px;">Edit</span>
<svg class="i" style="left:977.5px;top:133.8px" width="6" height="3.4"><path d="M0 0H6L3 3.4Z" fill="#fff"/></svg>
<svg class="i" style="left:990.5px;top:127px;" width="15" height="15" viewBox="0 0 16 16"><path d="M1.6 3.8 L3.8 1.6 L8 5.8 L12.2 1.6 L14.4 3.8 L10.2 8 L14.4 12.2 L12.2 14.4 L8 10.2 L3.8 14.4 L1.6 12.2 L5.8 8Z" fill="#e02a2a"/></svg>
<svg class="i" style="left:1013px;top:127px;" width="16" height="16" viewBox="0 0 16 16"><rect x=".6" y="9" width="14.8" height="6.4" fill="#e8f0fb" stroke="#8ab0e4" stroke-width=".8"/><path d="M2.6 10.6 L5.4 13.8 M5.4 10.6 L2.6 13.8" stroke="#2f5fae" stroke-width="1"/><path d="M12.6 0 L14.6 1.6 L8.6 11 L6.6 12.2 L6.8 9.8Z" fill="#f0c040" stroke="#b07818" stroke-width=".5"/><path d="M12.6 0 L14.6 1.6 L13.8 2.8 L11.8 1.2Z" fill="#e0584a"/></svg>
<svg class="i" style="left:1036px;top:127px;" width="16" height="16" viewBox="0 0 16 16"><path d="M1 .8 H6.6 L9.6 3.8 V10.6 H1Z" fill="#eef3fb" stroke="#9ab4dc" stroke-width=".8"/><rect x="7" y="7.6" width="8.4" height="8" fill="#e8f0fb" stroke="#8ab0e4" stroke-width=".8"/><path d="M8.6 11.6 L10.6 13.8 L14 9" stroke="#2c9a2c" stroke-width="1.6" fill="none"/></svg>
<span class="t " style="top:127px;font-size:12px;line-height:16px;color:#fff;letter-spacing:-0.169px;left:1057.5px;">Properties</span>
<div style="left:1118px;top:125px;width:1px;height:20px;background:#4a4a4a;"></div>
<svg class="i" style="left:1123.5px;top:127px;" width="16" height="16" viewBox="0 0 16 16"><path d="M.6 5 Q.6 4 1.6 4 H5.4 L7 5.8 H13.4 V15 H.6Z" fill="#e2bd3a"/><path d="M.6 7.4 H13.4 V14.2 Q13.4 15 12.6 15 H1.4 Q.6 15 .6 14.2Z" fill="url(#gFoldV)"/><path d="M12.4 0 L13.2 2.6 L15.8 3.4 L13.2 4.2 L12.4 6.8 L11.6 4.2 L9 3.4 L11.6 2.6Z" fill="#ffffff"/><circle cx="12.4" cy="3.4" r="1.6" fill="#fff"/></svg>
<span class="t " style="top:127px;font-size:12px;line-height:16px;color:#fff;letter-spacing:-0.005px;left:1146.5px;">New</span>
<svg class="i" style="left:1174.5px;top:133.8px" width="6" height="3.4"><path d="M0 0H6L3 3.4Z" fill="#fff"/></svg>
<div style="left:1190px;top:127.5px;width:3px;height:14px;background:repeating-linear-gradient(to bottom,#9a9a9a 0 1px,transparent 1px 2px)"></div>
<svg class="i" style="left:1197.5px;top:127px;" width="15" height="15" viewBox="0 0 16 16"><rect x=".8" y=".8" width="14.4" height="14.4" fill="#e6eefb" stroke="#a8c4ee" stroke-width=".8"/><path d="M8 3.6 V12.4 M3.6 8 H12.4" stroke="#2f5fae" stroke-width="2.2"/></svg>
<svg class="i" style="left:1220.5px;top:127px;" width="15" height="15" viewBox="0 0 16 16"><rect x=".8" y=".8" width="14.4" height="14.4" fill="#e6eefb" stroke="#a8c4ee" stroke-width=".8"/><path d="M3.6 8 H12.4" stroke="#2f5fae" stroke-width="2.2"/></svg>
<svg class="i" style="left:1243.5px;top:127px;" width="15" height="15" viewBox="0 0 16 16"><rect x=".8" y=".8" width="14.4" height="14.4" fill="#e6eefb" stroke="#a8c4ee" stroke-width=".8"/><path d="M3.4 3.4 H12.6 L8 13Z M5.4 7 H10.6" fill="none" stroke="#2f5fae" stroke-width="1.7"/></svg>
<div style="left:0px;top:148px;width:812px;height:21px;background:#999999;"></div>
<div style="left:817px;top:148px;width:1040px;height:21px;background:#999999;"></div>
<span class="t " style="top:150.5px;font-size:12px;line-height:16px;color:#c6c6ac;letter-spacing:0.102px;left:4px;">C:\web\ribbon-cms.novi\online-prodaja SUBDOMAIN\</span>
<span class="t " style="top:150.5px;font-size:12px;line-height:16px;color:#c6c6ac;letter-spacing:0.330px;left:823px;">/online-prodaja/</span>
<div style="left:0px;top:169px;width:812px;height:865px;background:#000;"></div>
<div style="left:2px;top:190px;width:809px;height:842px;background:#202020;"></div>
<div style="left:1px;top:190px;width:1px;height:842px;background:#a9a98a;"></div>
<div style="left:2px;top:172px;width:334px;height:17px;background:#dbd5d0;"></div>
<span class="t " style="top:172.5px;font-size:12px;line-height:16px;color:#000;letter-spacing:-0.254px;left:7px;">Name</span>
<div style="left:338px;top:172px;width:92px;height:17px;background:#dbd5d0;"></div>
<span class="t " style="top:172.5px;font-size:12px;line-height:16px;color:#000;letter-spacing:-0.836px;left:404.164px;">Size</span>
<div style="left:432px;top:172px;width:198px;height:17px;background:#dbd5d0;"></div>
<span class="t " style="top:172.5px;font-size:12px;line-height:16px;color:#000;letter-spacing:-0.254px;left:437px;">Type</span>
<div style="left:632px;top:172px;width:148px;height:17px;background:#dbd5d0;"></div>
<span class="t " style="top:172.5px;font-size:12px;line-height:16px;color:#000;letter-spacing:-0.243px;left:637px;">Changed</span>
<div style="left:781px;top:171px;width:29px;height:18px;background:#dbd5d0;"></div>
<div style="left:336px;top:190px;width:1px;height:842px;background:#a9a98a;"></div>
<div style="left:430px;top:190px;width:1px;height:842px;background:#a9a98a;"></div>
<div style="left:630px;top:190px;width:1px;height:842px;background:#a9a98a;"></div>
<div style="left:780px;top:190px;width:1px;height:842px;background:#a9a98a;"></div>
<svg class="i" style="left:164px;top:174px" width="8" height="4"><path d="M0 4H8L4 0Z" fill="#000"/></svg>
<div style="left:817px;top:169px;width:1040px;height:865px;background:#000;"></div>
<div style="left:820px;top:190px;width:1036px;height:842px;background:#202020;"></div>
<div style="left:819px;top:190px;width:1px;height:842px;background:#a9a98a;"></div>
<div style="left:820px;top:172px;width:413px;height:17px;background:#dbd5d0;"></div>
<span class="t " style="top:172.5px;font-size:12px;line-height:16px;color:#000;letter-spacing:-0.254px;left:825px;">Name</span>
<div style="left:1235px;top:172px;width:78px;height:17px;background:#dbd5d0;"></div>
<span class="t " style="top:172.5px;font-size:12px;line-height:16px;color:#000;letter-spacing:-0.836px;left:1287.16px;">Size</span>
<div style="left:1315px;top:172px;width:148px;height:17px;background:#dbd5d0;"></div>
<span class="t " style="top:172.5px;font-size:12px;line-height:16px;color:#000;letter-spacing:-0.243px;left:1320px;">Changed</span>
<div style="left:1465px;top:172px;width:77px;height:17px;background:#dbd5d0;"></div>
<span class="t " style="top:172.5px;font-size:12px;line-height:16px;color:#000;letter-spacing:-0.169px;left:1470px;">Rights</span>
<div style="left:1544px;top:172px;width:60px;height:17px;background:#dbd5d0;"></div>
<span class="t " style="top:172.5px;font-size:12px;line-height:16px;color:#000;letter-spacing:-0.069px;left:1549px;">Owner</span>
<div style="left:1605px;top:171px;width:250px;height:18px;background:#dbd5d0;"></div>
<div style="left:1233px;top:190px;width:1px;height:842px;background:#a9a98a;"></div>
<div style="left:1313px;top:190px;width:1px;height:842px;background:#a9a98a;"></div>
<div style="left:1463px;top:190px;width:1px;height:842px;background:#a9a98a;"></div>
<div style="left:1542px;top:190px;width:1px;height:842px;background:#a9a98a;"></div>
<div style="left:1604px;top:190px;width:1px;height:842px;background:#a9a98a;"></div>
<svg class="i" style="left:1021px;top:174px" width="8" height="4"><path d="M0 4H8L4 0Z" fill="#000"/></svg>
<svg class="i" style="left:5px;top:191px;" width="16" height="16" viewBox="0 0 16 16"><path d="M1 1.6 Q1 .6 2 .5 L10.6 .1 Q11.7 .1 11.7 1.2 L11.8 4.6 L13.7 5.5 Q14.2 5.8 14.2 6.6 L14.2 14.2 Q14.2 15 13.4 15.2 L8 16 L1.8 15.1 Q1 15 1 14.2 Z" fill="url(#gFoldV2)"/><path d="M5.2 1 L8.4 2.2 L8.6 15.9 L8 16 L5.2 15.6Z" fill="#d9c050" opacity=".55"/><path d="M11.8 4.6 L13.7 5.5 Q14.2 5.8 14.2 6.6 L14.2 14.2 Q14.2 15 13.4 15.2 L11.6 15.5Z" fill="#f7efb4" opacity=".8"/><path d="M12.4 9.5 V13" stroke="#7aa04a" stroke-width=".6" opacity=".7"/><path d="M5.2 8.6 V12.6 H10.8" stroke="#4a4212" stroke-width="1.5" fill="none"/><path d="M2.8 9.6 L5.2 6.8 L7.6 9.6Z" fill="#4a4212"/></svg>
<span class="t " style="top:191.5px;font-size:12px;line-height:16px;color:#fff;letter-spacing:-0.328px;left:23px;">..</span>
<span class="t " style="top:191.5px;font-size:12px;line-height:16px;color:#fff;letter-spacing:-0.043px;left:437px;">Parent directory</span>
<span class="t " style="top:191.5px;font-size:12px;line-height:16px;color:#fff;letter-spacing:-0.538px;left:637px;">9.2.2021.  6:24:40</span>
<svg class="i" style="left:5px;top:210px;" width="16" height="16" viewBox="0 0 16 16"><path d="M1 1.6 Q1 .6 2 .5 L10.6 .1 Q11.7 .1 11.7 1.2 L11.8 4.6 L13.7 5.5 Q14.2 5.8 14.2 6.6 L14.2 14.2 Q14.2 15 13.4 15.2 L8 16 L1.8 15.1 Q1 15 1 14.2 Z" fill="url(#gFoldV2)"/><path d="M5.2 1 L8.4 2.2 L8.6 15.9 L8 16 L5.2 15.6Z" fill="#d9c050" opacity=".55"/><path d="M11.8 4.6 L13.7 5.5 Q14.2 5.8 14.2 6.6 L14.2 14.2 Q14.2 15 13.4 15.2 L11.6 15.5Z" fill="#f7efb4" opacity=".8"/><path d="M12.4 9.5 V13" stroke="#7aa04a" stroke-width=".6" opacity=".7"/></svg>
<span class="t " style="top:210.5px;font-size:12px;line-height:16px;color:#fff;letter-spacing:-0.203px;left:23px;">.idea</span>
<span class="t " style="top:210.5px;font-size:12px;line-height:16px;color:#fff;letter-spacing:-0.062px;left:437px;">File folder</span>
<span class="t " style="top:210.5px;font-size:12px;line-height:16px;color:#fff;letter-spacing:-0.552px;left:637px;">27.1.2021.  17:56:58</span>
<svg class="i" style="left:5px;top:229px;" width="16" height="16" viewBox="0 0 16 16"><path d="M1 1.6 Q1 .6 2 .5 L10.6 .1 Q11.7 .1 11.7 1.2 L11.8 4.6 L13.7 5.5 Q14.2 5.8 14.2 6.6 L14.2 14.2 Q14.2 15 13.4 15.2 L8 16 L1.8 15.1 Q1 15 1 14.2 Z" fill="url(#gFoldV2)"/><path d="M5.2 1 L8.4 2.2 L8.6 15.9 L8 16 L5.2 15.6Z" fill="#d9c050" opacity=".55"/><path d="M11.8 4.6 L13.7 5.5 Q14.2 5.8 14.2 6.6 L14.2 14.2 Q14.2 15 13.4 15.2 L11.6 15.5Z" fill="#f7efb4" opacity=".8"/><path d="M12.4 9.5 V13" stroke="#7aa04a" stroke-width=".6" opacity=".7"/></svg>
<span class="t " style="top:229.5px;font-size:12px;line-height:16px;color:#fff;letter-spacing:0.062px;left:23px;">admin</span>
<span class="t " style="top:229.5px;font-size:12px;line-height:16px;color:#fff;letter-spacing:-0.062px;left:437px;">File folder</span>
<span class="t " style="top:229.5px;font-size:12px;line-height:16px;color:#fff;letter-spacing:-0.552px;left:637px;">27.1.2021.  18:01:58</span>
<svg class="i" style="left:5px;top:248px;" width="16" height="16" viewBox="0 0 16 16"><path d="M1 1.6 Q1 .6 2 .5 L10.6 .1 Q11.7 .1 11.7 1.2 L11.8 4.6 L13.7 5.5 Q14.2 5.8 14.2 6.6 L14.2 14.2 Q14.2 15 13.4 15.2 L8 16 L1.8 15.1 Q1 15 1 14.2 Z" fill="url(#gFoldV2)"/><path d="M5.2 1 L8.4 2.2 L8.6 15.9 L8 16 L5.2 15.6Z" fill="#d9c050" opacity=".55"/><path d="M11.8 4.6 L13.7 5.5 Q14.2 5.8 14.2 6.6 L14.2 14.2 Q14.2 15 13.4 15.2 L11.6 15.5Z" fill="#f7efb4" opacity=".8"/><path d="M12.4 9.5 V13" stroke="#7aa04a" stroke-width=".6" opacity=".7"/></svg>
<span class="t " style="top:248.5px;font-size:12px;line-height:16px;color:#fff;letter-spacing:0.045px;left:23px;">catalog</span>
<span class="t " style="top:248.5px;font-size:12px;line-height:16px;color:#fff;letter-spacing:-0.062px;left:437px;">File folder</span>
<span class="t " style="top:248.5px;font-size:12px;line-height:16px;color:#fff;letter-spacing:-0.552px;left:637px;">27.1.2021.  18:05:46</span>
<svg class="i" style="left:5px;top:267px;" width="16" height="16" viewBox="0 0 16 16"><path d="M1 1.6 Q1 .6 2 .5 L10.6 .1 Q11.7 .1 11.7 1.2 L11.8 4.6 L13.7 5.5 Q14.2 5.8 14.2 6.6 L14.2 14.2 Q14.2 15 13.4 15.2 L8 16 L1.8 15.1 Q1 15 1 14.2 Z" fill="url(#gFoldV2)"/><path d="M5.2 1 L8.4 2.2 L8.6 15.9 L8 16 L5.2 15.6Z" fill="#d9c050" opacity=".55"/><path d="M11.8 4.6 L13.7 5.5 Q14.2 5.8 14.2 6.6 L14.2 14.2 Q14.2 15 13.4 15.2 L11.6 15.5Z" fill="#f7efb4" opacity=".8"/><path d="M12.4 9.5 V13" stroke="#7aa04a" stroke-width=".6" opacity=".7"/></svg>
<span class="t " style="top:267.5px;font-size:12px;line-height:16px;color:#fff;letter-spacing:-0.812px;left:23px;">Classes</span>
<span class="t " style="top:267.5px;font-size:12px;line-height:16px;color:#fff;letter-spacing:-0.062px;left:437px;">File folder</span>
<span class="t " style="top:267.5px;font-size:12px;line-height:16px;color:#fff;letter-spacing:-0.545px;left:637px;">3.2.2021.  19:17:49</span>
<svg class="i" style="left:5px;top:286px;" width="16" height="16" viewBox="0 0 16 16"><path d="M1 1.6 Q1 .6 2 .5 L10.6 .1 Q11.7 .1 11.7 1.2 L11.8 4.6 L13.7 5.5 Q14.2 5.8 14.2 6.6 L14.2 14.2 Q14.2 15 13.4 15.2 L8 16 L1.8 15.1 Q1 15 1 14.2 Z" fill="url(#gFoldV2)"/><path d="M5.2 1 L8.4 2.2 L8.6 15.9 L8 16 L5.2 15.6Z" fill="#d9c050" opacity=".55"/><path d="M11.8 4.6 L13.7 5.5 Q14.2 5.8 14.2 6.6 L14.2 14.2 Q14.2 15 13.4 15.2 L11.6 15.5Z" fill="#f7efb4" opacity=".8"/><path d="M12.4 9.5 V13" stroke="#7aa04a" stroke-width=".6" opacity=".7"/></svg>
<span class="t " style="top:286.5px;font-size:12px;line-height:16px;color:#fff;letter-spacing:-0.138px;left:23px;">image</span>
<span class="t " style="top:286.5px;font-size:12px;line-height:16px;color:#fff;letter-spacing:-0.062px;left:437px;">File folder</span>
<span class="t " style="top:286.5px;font-size:12px;line-height:16px;color:#fff;letter-spacing:-0.545px;left:637px;">8.2.2021.  20:49:21</span>
<svg class="i" style="left:5px;top:305px;" width="16" height="16" viewBox="0 0 16 16"><path d="M1 1.6 Q1 .6 2 .5 L10.6 .1 Q11.7 .1 11.7 1.2 L11.8 4.6 L13.7 5.5 Q14.2 5.8 14.2 6.6 L14.2 14.2 Q14.2 15 13.4 15.2 L8 16 L1.8 15.1 Q1 15 1 14.2 Z" fill="url(#gFoldV2)"/><path d="M5.2 1 L8.4 2.2 L8.6 15.9 L8 16 L5.2 15.6Z" fill="#d9c050" opacity=".55"/><path d="M11.8 4.6 L13.7 5.5 Q14.2 5.8 14.2 6.6 L14.2 14.2 Q14.2 15 13.4 15.2 L11.6 15.5Z" fill="#f7efb4" opacity=".8"/><path d="M12.4 9.5 V13" stroke="#7aa04a" stroke-width=".6" opacity=".7"/></svg>
<span class="t " style="top:305.5px;font-size:12px;line-height:16px;color:#fff;letter-spacing:0.045px;left:23px;">malovic</span>
<span class="t " style="top:305.5px;font-size:12px;line-height:16px;color:#fff;letter-spacing:-0.062px;left:437px;">File folder</span>
<span class="t " style="top:305.5px;font-size:12px;line-height:16px;color:#fff;letter-spacing:-0.507px;left:637px;">11.2.2021.  23:06:54</span>
<svg class="i" style="left:5px;top:324px;" width="16" height="16" viewBox="0 0 16 16"><path d="M1 1.6 Q1 .6 2 .5 L10.6 .1 Q11.7 .1 11.7 1.2 L11.8 4.6 L13.7 5.5 Q14.2 5.8 14.2 6.6 L14.2 14.2 Q14.2 15 13.4 15.2 L8 16 L1.8 15.1 Q1 15 1 14.2 Z" fill="url(#gFoldV2)"/><path d="M5.2 1 L8.4 2.2 L8.6 15.9 L8 16 L5.2 15.6Z" fill="#d9c050" opacity=".55"/><path d="M11.8 4.6 L13.7 5.5 Q14.2 5.8 14.2 6.6 L14.2 14.2 Q14.2 15 13.4 15.2 L11.6 15.5Z" fill="#f7efb4" opacity=".8"/><path d="M12.4 9.5 V13" stroke="#7aa04a" stroke-width=".6" opacity=".7"/></svg>
<span class="t " style="top:324.5px;font-size:12px;line-height:16px;color:#fff;letter-spacing:-0.333px;left:23px;">system</span>
<span class="t " style="top:324.5px;font-size:12px;line-height:16px;color:#fff;letter-spacing:-0.062px;left:437px;">File folder</span>
<span class="t " style="top:324.5px;font-size:12px;line-height:16px;color:#fff;letter-spacing:-0.507px;left:637px;">27.1.2021.  18:11:08</span>
<svg class="i" style="left:5px;top:343px;" width="16" height="16" viewBox="0 0 16 16"><path d="M2 0 H11.6 L15 3.4 V16 H2Z" fill="#f3f1ef"/><path d="M11.4 .4 V3.6 H14.6Z" fill="#fafafa" stroke="#bdbdbd" stroke-width=".7"/></svg>
<span class="t " style="top:343.5px;font-size:12px;line-height:16px;color:#fff;letter-spacing:-0.297px;left:23px;">.htaccess</span>
<span class="t " style="top:343.5px;font-size:12px;line-height:16px;color:#fff;letter-spacing:-0.603px;left:397.397px;">2.436</span>
<span class="t " style="top:343.5px;font-size:12px;line-height:16px;color:#fff;letter-spacing:-0.856px;left:437px;">HTACCESS File</span>
<span class="t " style="top:343.5px;font-size:12px;line-height:16px;color:#fff;letter-spacing:-0.552px;left:637px;">20.7.2020.  18:29:34</span>
<svg class="i" style="left:5px;top:362px;" width="16" height="16" viewBox="0 0 16 16"><path d="M3 1 H10.6 L13 3.4 V15 H3Z" fill="#2c1b63"/><path d="M10.4 1 V3.6 H13Z" fill="#a48ce0"/><circle cx="8" cy="9.2" r="4.1" fill="url(#gFox)"/><path d="M7.6 5.2 Q9 5 9.6 6 Q11.6 7 11.4 9 Q10.6 7.6 9 7.8 Q7.6 7 7.6 5.2Z" fill="#ffd35a"/><path d="M6.8 8.2 Q8.2 8 8.6 9.2 Q8.4 10.6 7 10.4 Q6 9.6 6.8 8.2Z" fill="#ff9a7a" opacity=".8"/></svg>
<span class="t " style="top:362.5px;font-size:12px;line-height:16px;color:#fff;letter-spacing:-0.224px;left:23px;">400.shtml</span>
<span class="t " style="top:362.5px;font-size:12px;line-height:16px;color:#fff;letter-spacing:-0.603px;left:397.397px;">1.008</span>
<span class="t " style="top:362.5px;font-size:12px;line-height:16px;color:#fff;letter-spacing:-0.107px;left:437px;">Firefox HTML Document</span>
<span class="t " style="top:362.5px;font-size:12px;line-height:16px;color:#fff;letter-spacing:-0.545px;left:637px;">5.2.2021.  19:50:45</span>
<svg class="i" style="left:5px;top:381px;" width="16" height="16" viewBox="0 0 16 16"><path d="M3 1 H10.6 L13 3.4 V15 H3Z" fill="#2c1b63"/><path d="M10.4 1 V3.6 H13Z" fill="#a48ce0"/><circle cx="8" cy="9.2" r="4.1" fill="url(#gFox)"/><path d="M7.6 5.2 Q9 5 9.6 6 Q11.6 7 11.4 9 Q10.6 7.6 9 7.8 Q7.6 7 7.6 5.2Z" fill="#ffd35a"/><path d="M6.8 8.2 Q8.2 8 8.6 9.2 Q8.4 10.6 7 10.4 Q6 9.6 6.8 8.2Z" fill="#ff9a7a" opacity=".8"/></svg>
<span class="t " style="top:381.5px;font-size:12px;line-height:16px;color:#fff;letter-spacing:-0.224px;left:23px;">401.shtml</span>
<span class="t " style="top:381.5px;font-size:12px;line-height:16px;color:#fff;letter-spacing:-0.603px;left:397.397px;">1.034</span>
<span class="t " style="top:381.5px;font-size:12px;line-height:16px;color:#fff;letter-spacing:-0.107px;left:437px;">Firefox HTML Document</span>
<span class="t " style="top:381.5px;font-size:12px;line-height:16px;color:#fff;letter-spacing:-0.545px;left:637px;">5.2.2021.  19:50:40</span>
<svg class="i" style="left:5px;top:400px;" width="16" height="16" viewBox="0 0 16 16"><path d="M3 1 H10.6 L13 3.4 V15 H3Z" fill="#2c1b63"/><path d="M10.4 1 V3.6 H13Z" fill="#a48ce0"/><circle cx="8" cy="9.2" r="4.1" fill="url(#gFox)"/><path d="M7.6 5.2 Q9 5 9.6 6 Q11.6 7 11.4 9 Q10.6 7.6 9 7.8 Q7.6 7 7.6 5.2Z" fill="#ffd35a"/><path d="M6.8 8.2 Q8.2 8 8.6 9.2 Q8.4 10.6 7 10.4 Q6 9.6 6.8 8.2Z" fill="#ff9a7a" opacity=".8"/></svg>
<span class="t " style="top:400.5px;font-size:12px;line-height:16px;color:#fff;letter-spacing:-0.224px;left:23px;">403.shtml</span>
<span class="t " style="top:400.5px;font-size:12px;line-height:16px;color:#fff;letter-spacing:-0.603px;left:397.397px;">1.108</span>
<span class="t " style="top:400.5px;font-size:12px;line-height:16px;color:#fff;letter-spacing:-0.107px;left:437px;">Firefox HTML Document</span>
<span class="t " style="top:400.5px;font-size:12px;line-height:16px;color:#fff;letter-spacing:-0.545px;left:637px;">5.2.2021.  19:51:14</span>
<svg class="i" style="left:5px;top:419px;" width="16" height="16" viewBox="0 0 16 16"><path d="M3 1 H10.6 L13 3.4 V15 H3Z" fill="#2c1b63"/><path d="M10.4 1 V3.6 H13Z" fill="#a48ce0"/><circle cx="8" cy="9.2" r="4.1" fill="url(#gFox)"/><path d="M7.6 5.2 Q9 5 9.6 6 Q11.6 7 11.4 9 Q10.6 7.6 9 7.8 Q7.6 7 7.6 5.2Z" fill="#ffd35a"/><path d="M6.8 8.2 Q8.2 8 8.6 9.2 Q8.4 10.6 7 10.4 Q6 9.6 6.8 8.2Z" fill="#ff9a7a" opacity=".8"/></svg>
<span class="t " style="top:419.5px;font-size:12px;line-height:16px;color:#fff;letter-spacing:-0.224px;left:23px;">404.shtml</span>
<span class="t " style="top:419.5px;font-size:12px;line-height:16px;color:#fff;letter-spacing:-0.603px;left:397.397px;">1.035</span>
<span class="t " style="top:419.5px;font-size:12px;line-height:16px;color:#fff;letter-spacing:-0.107px;left:437px;">Firefox HTML Document</span>
<span class="t " style="top:419.5px;font-size:12px;line-height:16px;color:#fff;letter-spacing:-0.545px;left:637px;">5.2.2021.  19:51:26</span>
<svg class="i" style="left:5px;top:438px;" width="16" height="16" viewBox="0 0 16 16"><path d="M3 1 H10.6 L13 3.4 V15 H3Z" fill="#2c1b63"/><path d="M10.4 1 V3.6 H13Z" fill="#a48ce0"/><circle cx="8" cy="9.2" r="4.1" fill="url(#gFox)"/><path d="M7.6 5.2 Q9 5 9.6 6 Q11.6 7 11.4 9 Q10.6 7.6 9 7.8 Q7.6 7 7.6 5.2Z" fill="#ffd35a"/><path d="M6.8 8.2 Q8.2 8 8.6 9.2 Q8.4 10.6 7 10.4 Q6 9.6 6.8 8.2Z" fill="#ff9a7a" opacity=".8"/></svg>
<span class="t " style="top:438.5px;font-size:12px;line-height:16px;color:#fff;letter-spacing:-0.224px;left:23px;">500.shtml</span>
<span class="t " style="top:438.5px;font-size:12px;line-height:16px;color:#fff;letter-spacing:-0.603px;left:397.397px;">1.035</span>
<span class="t " style="top:438.5px;font-size:12px;line-height:16px;color:#fff;letter-spacing:-0.107px;left:437px;">Firefox HTML Document</span>
<span class="t " style="top:438.5px;font-size:12px;line-height:16px;color:#fff;letter-spacing:-0.545px;left:637px;">5.2.2021.  19:51:46</span>
<svg class="i" style="left:5px;top:457px;" width="16" height="16" viewBox="0 0 16 16"><rect x="1" y="1.2" width="11.4" height="14.4" fill="#fbfbfb"/><rect x="2.2" y="5.6" width="9" height="8.8" fill="url(#gGreenPad)"/><path d="M2.2 .4 V3 M4.4 .4 V3 M6.6 .4 V3 M8.8 .4 V3 M11 .4 V3" stroke="#333" stroke-width="1.1"/><path d="M13.6 1.6 L14.8 2.6 L9.6 11.2 L8 12.2 L8.3 10.3Z" fill="#f0a820" stroke="#c07810" stroke-width=".5"/><path d="M8 12.2 L8.2 11 L9 11.6Z" fill="#333"/></svg>
<span class="t " style="top:457.5px;font-size:12px;line-height:16px;color:#fff;letter-spacing:0.264px;left:23px;">config.php</span>
<span class="t " style="top:457.5px;font-size:12px;line-height:16px;color:#fff;letter-spacing:-0.425px;left:397.575px;">1.118</span>
<span class="t " style="top:457.5px;font-size:12px;line-height:16px;color:#fff;letter-spacing:-0.391px;left:437px;">PHP File</span>
<span class="t " style="top:457.5px;font-size:12px;line-height:16px;color:#fff;letter-spacing:-0.552px;left:637px;">26.1.2021.  22:29:47</span>
<svg class="i" style="left:5px;top:476px;" width="16" height="16" viewBox="0 0 16 16"><rect x="1" y="1.2" width="11.4" height="14.4" fill="#fbfbfb"/><rect x="2.2" y="5.6" width="9" height="8.8" fill="url(#gGreenPad)"/><path d="M2.2 .4 V3 M4.4 .4 V3 M6.6 .4 V3 M8.8 .4 V3 M11 .4 V3" stroke="#333" stroke-width="1.1"/><path d="M13.6 1.6 L14.8 2.6 L9.6 11.2 L8 12.2 L8.3 10.3Z" fill="#f0a820" stroke="#c07810" stroke-width=".5"/><path d="M8 12.2 L8.2 11 L9 11.6Z" fill="#333"/></svg>
<span class="t " style="top:476.5px;font-size:12px;line-height:16px;color:#fff;letter-spacing:0.265px;left:23px;">config-dist.php</span>
<span class="t " style="top:476.5px;font-size:12px;line-height:16px;color:#fff;letter-spacing:-0.672px;left:418.328px;">0</span>
<span class="t " style="top:476.5px;font-size:12px;line-height:16px;color:#fff;letter-spacing:-0.391px;left:437px;">PHP File</span>
<span class="t " style="top:476.5px;font-size:12px;line-height:16px;color:#fff;letter-spacing:-0.552px;left:637px;">20.7.2020.  18:29:34</span>
<svg class="i" style="left:5px;top:495px;" width="16" height="16" viewBox="0 0 16 16"><rect x="1" y="1.2" width="11.4" height="14.4" fill="#fbfbfb"/><rect x="2.2" y="5.6" width="9" height="8.8" fill="url(#gGreenPad)"/><path d="M2.2 .4 V3 M4.4 .4 V3 M6.6 .4 V3 M8.8 .4 V3 M11 .4 V3" stroke="#333" stroke-width="1.1"/><path d="M13.6 1.6 L14.8 2.6 L9.6 11.2 L8 12.2 L8.3 10.3Z" fill="#f0a820" stroke="#c07810" stroke-width=".5"/><path d="M8 12.2 L8.2 11 L9 11.6Z" fill="#333"/></svg>
<span class="t " style="top:495.5px;font-size:12px;line-height:16px;color:#fff;left:23px;">index.php</span>
<span class="t " style="top:495.5px;font-size:12px;line-height:16px;color:#fff;letter-spacing:-0.672px;left:406.328px;">293</span>
<span class="t " style="top:495.5px;font-size:12px;line-height:16px;color:#fff;letter-spacing:-0.391px;left:437px;">PHP File</span>
<span class="t " style="top:495.5px;font-size:12px;line-height:16px;color:#fff;letter-spacing:-0.552px;left:637px;">20.7.2020.  18:29:34</span>
<svg class="i" style="left:5px;top:514px;" width="16" height="16" viewBox="0 0 16 16"><path d="M2.6 .4 H12.6 L13.6 13.6 H1.6Z" fill="#deedfc" stroke="#3f6ea8" stroke-width=".7"/><path d="M2.6 .4 H12.6 V1.6 H2.6Z" fill="#5f96d8"/><path d="M1 13.6 H14.4 V15.6 H1.6Z" fill="#9cc4ee" stroke="#4a7ab8" stroke-width=".5"/><path d="M3.8 7.6 L5.6 3 L7.4 7.6 M4.5 6 H6.7" stroke="#e8843a" stroke-width="1.1" fill="none"/><path d="M8.6 3.6 H11.6 M8.6 5.8 H11.6 M4 9.4 H11.6 M4 11.4 H11.8" stroke="#44689c" stroke-width=".9"/></svg>
<span class="t " style="top:514.5px;font-size:12px;line-height:16px;color:#fff;letter-spacing:0.234px;left:23px;">php.ini</span>
<span class="t " style="top:514.5px;font-size:12px;line-height:16px;color:#fff;letter-spacing:-0.672px;left:406.328px;">418</span>
<span class="t " style="top:514.5px;font-size:12px;line-height:16px;color:#fff;letter-spacing:-0.250px;left:437px;">INI File</span>
<span class="t " style="top:514.5px;font-size:12px;line-height:16px;color:#fff;letter-spacing:-0.552px;left:637px;">20.7.2020.  18:29:34</span>
<div style="left:820px;top:246px;width:413px;height:287px;background:#000;"></div>
<div style="left:823px;top:248px;width:409px;height:17px;background:#0a246a;"></div>
<div style="left:823px;top:267px;width:409px;height:17px;background:#0a246a;"></div>
<div style="left:823px;top:286px;width:409px;height:17px;background:#0a246a;"></div>
<div style="left:823px;top:305px;width:409px;height:17px;background:#0a246a;"></div>
<div style="left:823px;top:324px;width:409px;height:17px;background:#0a246a;"></div>
<div style="left:823px;top:343px;width:409px;height:17px;background:#0a246a;"></div>
<div style="left:823px;top:362px;width:409px;height:17px;background:#0a246a;"></div>
<div style="left:823px;top:381px;width:409px;height:17px;background:#0a246a;"></div>
<div style="left:823px;top:400px;width:409px;height:17px;background:#0a246a;"></div>
<div style="left:823px;top:419px;width:409px;height:17px;background:#0a246a;"></div>
<div style="left:823px;top:438px;width:409px;height:17px;background:#0a246a;"></div>
<div style="left:823px;top:457px;width:409px;height:17px;background:#0a246a;"></div>
<div style="left:823px;top:476px;width:409px;height:17px;background:#0a246a;"></div>
<div style="left:823px;top:495px;width:409px;height:17px;background:#0a246a;"></div>
<div style="left:823px;top:514px;width:409px;height:17px;background:#0a246a;"></div>
<svg class="i" style="left:823px;top:191px;" width="16" height="16" viewBox="0 0 16 16"><path d="M1 1.6 Q1 .6 2 .5 L10.6 .1 Q11.7 .1 11.7 1.2 L11.8 4.6 L13.7 5.5 Q14.2 5.8 14.2 6.6 L14.2 14.2 Q14.2 15 13.4 15.2 L8 16 L1.8 15.1 Q1 15 1 14.2 Z" fill="url(#gFoldV2)"/><path d="M5.2 1 L8.4 2.2 L8.6 15.9 L8 16 L5.2 15.6Z" fill="#d9c050" opacity=".55"/><path d="M11.8 4.6 L13.7 5.5 Q14.2 5.8 14.2 6.6 L14.2 14.2 Q14.2 15 13.4 15.2 L11.6 15.5Z" fill="#f7efb4" opacity=".8"/><path d="M12.4 9.5 V13" stroke="#7aa04a" stroke-width=".6" opacity=".7"/><path d="M5.2 8.6 V12.6 H10.8" stroke="#4a4212" stroke-width="1.5" fill="none"/><path d="M2.8 9.6 L5.2 6.8 L7.6 9.6Z" fill="#4a4212"/></svg>
<span class="t " style="top:191.5px;font-size:12px;line-height:16px;color:#fff;letter-spacing:-0.328px;left:841px;">..</span>
<svg class="i" style="left:823px;top:210px;" width="16" height="16" viewBox="0 0 16 16"><path d="M1 1.6 Q1 .6 2 .5 L10.6 .1 Q11.7 .1 11.7 1.2 L11.8 4.6 L13.7 5.5 Q14.2 5.8 14.2 6.6 L14.2 14.2 Q14.2 15 13.4 15.2 L8 16 L1.8 15.1 Q1 15 1 14.2 Z" fill="url(#gFoldV2)"/><path d="M5.2 1 L8.4 2.2 L8.6 15.9 L8 16 L5.2 15.6Z" fill="#d9c050" opacity=".55"/><path d="M11.8 4.6 L13.7 5.5 Q14.2 5.8 14.2 6.6 L14.2 14.2 Q14.2 15 13.4 15.2 L11.6 15.5Z" fill="#f7efb4" opacity=".8"/><path d="M12.4 9.5 V13" stroke="#7aa04a" stroke-width=".6" opacity=".7"/></svg>
<span class="t " style="top:210.5px;font-size:12px;line-height:16px;color:#8a8a8a;letter-spacing:-0.203px;left:841px;">.idea</span>
<span class="t " style="top:210.5px;font-size:12px;line-height:16px;color:#8a8a8a;letter-spacing:-0.563px;left:1320px;">26.1.2021. 22:29:46</span>
<span class="t " style="top:210.5px;font-size:12px;line-height:16px;color:#8a8a8a;letter-spacing:-0.075px;left:1470px;">rwxr-xr-x</span>
<span class="t " style="top:210.5px;font-size:12px;line-height:16px;color:#8a8a8a;letter-spacing:-0.672px;left:1550px;">1475</span>
<svg class="i" style="left:823px;top:229px;" width="16" height="16" viewBox="0 0 16 16"><path d="M1 1.6 Q1 .6 2 .5 L10.6 .1 Q11.7 .1 11.7 1.2 L11.8 4.6 L13.7 5.5 Q14.2 5.8 14.2 6.6 L14.2 14.2 Q14.2 15 13.4 15.2 L8 16 L1.8 15.1 Q1 15 1 14.2 Z" fill="url(#gFoldV2)"/><path d="M5.2 1 L8.4 2.2 L8.6 15.9 L8 16 L5.2 15.6Z" fill="#d9c050" opacity=".55"/><path d="M11.8 4.6 L13.7 5.5 Q14.2 5.8 14.2 6.6 L14.2 14.2 Q14.2 15 13.4 15.2 L11.6 15.5Z" fill="#f7efb4" opacity=".8"/><path d="M12.4 9.5 V13" stroke="#7aa04a" stroke-width=".6" opacity=".7"/></svg>
<span class="t " style="top:229.5px;font-size:12px;line-height:16px;color:#fff;letter-spacing:0.062px;left:841px;">admin</span>
<span class="t " style="top:229.5px;font-size:12px;line-height:16px;color:#fff;letter-spacing:-0.557px;left:1320px;">3.2.2021. 21:25:09</span>
<span class="t " style="top:229.5px;font-size:12px;line-height:16px;color:#fff;letter-spacing:-0.075px;left:1470px;">rwxr-xr-x</span>
<span class="t " style="top:229.5px;font-size:12px;line-height:16px;color:#fff;letter-spacing:-0.672px;left:1550px;">1475</span>
<svg class="i" style="left:823px;top:248px;" width="16" height="16" viewBox="0 0 16 16"><path d="M1 1.6 Q1 .6 2 .5 L10.6 .1 Q11.7 .1 11.7 1.2 L11.8 4.6 L13.7 5.5 Q14.2 5.8 14.2 6.6 L14.2 14.2 Q14.2 15 13.4 15.2 L8 16 L1.8 15.1 Q1 15 1 14.2 Z" fill="url(#gFoldV2)"/><path d="M5.2 1 L8.4 2.2 L8.6 15.9 L8 16 L5.2 15.6Z" fill="#d9c050" opacity=".55"/><path d="M11.8 4.6 L13.7 5.5 Q14.2 5.8 14.2 6.6 L14.2 14.2 Q14.2 15 13.4 15.2 L11.6 15.5Z" fill="#f7efb4" opacity=".8"/><path d="M12.4 9.5 V13" stroke="#7aa04a" stroke-width=".6" opacity=".7"/></svg>
<span class="t " style="top:248.5px;font-size:12px;line-height:16px;color:#fff;letter-spacing:0.045px;left:841px;">catalog</span>
<span class="t " style="top:248.5px;font-size:12px;line-height:16px;color:#fff;letter-spacing:-0.563px;left:1320px;">26.1.2021. 22:29:46</span>
<span class="t " style="top:248.5px;font-size:12px;line-height:16px;color:#fff;letter-spacing:-0.075px;left:1470px;">rwxr-xr-x</span>
<span class="t " style="top:248.5px;font-size:12px;line-height:16px;color:#fff;letter-spacing:-0.672px;left:1550px;">1475</span>
<svg class="i" style="left:823px;top:267px;" width="16" height="16" viewBox="0 0 16 16"><path d="M1 1.6 Q1 .6 2 .5 L10.6 .1 Q11.7 .1 11.7 1.2 L11.8 4.6 L13.7 5.5 Q14.2 5.8 14.2 6.6 L14.2 14.2 Q14.2 15 13.4 15.2 L8 16 L1.8 15.1 Q1 15 1 14.2 Z" fill="url(#gFoldV2)"/><path d="M5.2 1 L8.4 2.2 L8.6 15.9 L8 16 L5.2 15.6Z" fill="#d9c050" opacity=".55"/><path d="M11.8 4.6 L13.7 5.5 Q14.2 5.8 14.2 6.6 L14.2 14.2 Q14.2 15 13.4 15.2 L11.6 15.5Z" fill="#f7efb4" opacity=".8"/><path d="M12.4 9.5 V13" stroke="#7aa04a" stroke-width=".6" opacity=".7"/></svg>
<span class="t " style="top:267.5px;font-size:12px;line-height:16px;color:#fff;letter-spacing:-0.812px;left:841px;">Classes</span>
<span class="t " style="top:267.5px;font-size:12px;line-height:16px;color:#fff;letter-spacing:-0.563px;left:1320px;">19.1.2021. 22:31:50</span>
<span class="t " style="top:267.5px;font-size:12px;line-height:16px;color:#fff;letter-spacing:-0.075px;left:1470px;">rwxr-xr-x</span>
<span class="t " style="top:267.5px;font-size:12px;line-height:16px;color:#fff;letter-spacing:-0.672px;left:1550px;">1475</span>
<svg class="i" style="left:823px;top:286px;" width="16" height="16" viewBox="0 0 16 16"><path d="M1 1.6 Q1 .6 2 .5 L10.6 .1 Q11.7 .1 11.7 1.2 L11.8 4.6 L13.7 5.5 Q14.2 5.8 14.2 6.6 L14.2 14.2 Q14.2 15 13.4 15.2 L8 16 L1.8 15.1 Q1 15 1 14.2 Z" fill="url(#gFoldV2)"/><path d="M5.2 1 L8.4 2.2 L8.6 15.9 L8 16 L5.2 15.6Z" fill="#d9c050" opacity=".55"/><path d="M11.8 4.6 L13.7 5.5 Q14.2 5.8 14.2 6.6 L14.2 14.2 Q14.2 15 13.4 15.2 L11.6 15.5Z" fill="#f7efb4" opacity=".8"/><path d="M12.4 9.5 V13" stroke="#7aa04a" stroke-width=".6" opacity=".7"/></svg>
<span class="t " style="top:286.5px;font-size:12px;line-height:16px;color:#fff;letter-spacing:-0.138px;left:841px;">image</span>
<span class="t " style="top:286.5px;font-size:12px;line-height:16px;color:#fff;letter-spacing:-0.557px;left:1320px;">5.2.2021. 19:52:06</span>
<span class="t " style="top:286.5px;font-size:12px;line-height:16px;color:#fff;letter-spacing:-0.075px;left:1470px;">rwxr-xr-x</span>
<span class="t " style="top:286.5px;font-size:12px;line-height:16px;color:#fff;letter-spacing:-0.672px;left:1550px;">1475</span>
<svg class="i" style="left:823px;top:305px;" width="16" height="16" viewBox="0 0 16 16"><path d="M1 1.6 Q1 .6 2 .5 L10.6 .1 Q11.7 .1 11.7 1.2 L11.8 4.6 L13.7 5.5 Q14.2 5.8 14.2 6.6 L14.2 14.2 Q14.2 15 13.4 15.2 L8 16 L1.8 15.1 Q1 15 1 14.2 Z" fill="url(#gFoldV2)"/><path d="M5.2 1 L8.4 2.2 L8.6 15.9 L8 16 L5.2 15.6Z" fill="#d9c050" opacity=".55"/><path d="M11.8 4.6 L13.7 5.5 Q14.2 5.8 14.2 6.6 L14.2 14.2 Q14.2 15 13.4 15.2 L11.6 15.5Z" fill="#f7efb4" opacity=".8"/><path d="M12.4 9.5 V13" stroke="#7aa04a" stroke-width=".6" opacity=".7"/></svg>
<span class="t " style="top:305.5px;font-size:12px;line-height:16px;color:#fff;letter-spacing:0.045px;left:841px;">malovic</span>
<span class="t " style="top:305.5px;font-size:12px;line-height:16px;color:#fff;letter-spacing:-0.508px;left:1320px;">10.2.2021. 4:11:21</span>
<span class="t " style="top:305.5px;font-size:12px;line-height:16px;color:#fff;letter-spacing:-0.075px;left:1470px;">rwxr-xr-x</span>
<span class="t " style="top:305.5px;font-size:12px;line-height:16px;color:#fff;letter-spacing:-0.672px;left:1550px;">1475</span>
<svg class="i" style="left:823px;top:324px;" width="16" height="16" viewBox="0 0 16 16"><path d="M1 1.6 Q1 .6 2 .5 L10.6 .1 Q11.7 .1 11.7 1.2 L11.8 4.6 L13.7 5.5 Q14.2 5.8 14.2 6.6 L14.2 14.2 Q14.2 15 13.4 15.2 L8 16 L1.8 15.1 Q1 15 1 14.2 Z" fill="url(#gFoldV2)"/><path d="M5.2 1 L8.4 2.2 L8.6 15.9 L8 16 L5.2 15.6Z" fill="#d9c050" opacity=".55"/><path d="M11.8 4.6 L13.7 5.5 Q14.2 5.8 14.2 6.6 L14.2 14.2 Q14.2 15 13.4 15.2 L11.6 15.5Z" fill="#f7efb4" opacity=".8"/><path d="M12.4 9.5 V13" stroke="#7aa04a" stroke-width=".6" opacity=".7"/></svg>
<span class="t " style="top:324.5px;font-size:12px;line-height:16px;color:#fff;letter-spacing:-0.333px;left:841px;">system</span>
<span class="t " style="top:324.5px;font-size:12px;line-height:16px;color:#fff;letter-spacing:-0.563px;left:1320px;">26.1.2021. 22:29:46</span>
<span class="t " style="top:324.5px;font-size:12px;line-height:16px;color:#fff;letter-spacing:-0.075px;left:1470px;">rwxr-xr-x</span>
<span class="t " style="top:324.5px;font-size:12px;line-height:16px;color:#fff;letter-spacing:-0.672px;left:1550px;">1475</span>
<svg class="i" style="left:823px;top:343px;" width="16" height="16" viewBox="0 0 16 16"><path d="M2 0 H11.6 L15 3.4 V16 H2Z" fill="#f3f1ef"/><path d="M11.4 .4 V3.6 H14.6Z" fill="#fafafa" stroke="#bdbdbd" stroke-width=".7"/></svg>
<span class="t " style="top:343.5px;font-size:12px;line-height:16px;color:#fff;letter-spacing:-0.297px;left:841px;">.htaccess</span>
<span class="t " style="top:343.5px;font-size:12px;line-height:16px;color:#fff;letter-spacing:-0.603px;left:1280.4px;">2.436</span>
<span class="t " style="top:343.5px;font-size:12px;line-height:16px;color:#fff;letter-spacing:-0.563px;left:1320px;">20.7.2020. 18:29:34</span>
<span class="t " style="top:343.5px;font-size:12px;line-height:16px;color:#fff;letter-spacing:0.592px;left:1470px;">rw-r--r--</span>
<span class="t " style="top:343.5px;font-size:12px;line-height:16px;color:#fff;letter-spacing:-0.672px;left:1550px;">1475</span>
<svg class="i" style="left:823px;top:362px;" width="16" height="16" viewBox="0 0 16 16"><path d="M3 1 H10.6 L13 3.4 V15 H3Z" fill="#2c1b63"/><path d="M10.4 1 V3.6 H13Z" fill="#a48ce0"/><circle cx="8" cy="9.2" r="4.1" fill="url(#gFox)"/><path d="M7.6 5.2 Q9 5 9.6 6 Q11.6 7 11.4 9 Q10.6 7.6 9 7.8 Q7.6 7 7.6 5.2Z" fill="#ffd35a"/><path d="M6.8 8.2 Q8.2 8 8.6 9.2 Q8.4 10.6 7 10.4 Q6 9.6 6.8 8.2Z" fill="#ff9a7a" opacity=".8"/></svg>
<span class="t " style="top:362.5px;font-size:12px;line-height:16px;color:#fff;letter-spacing:-0.224px;left:841px;">400.shtml</span>
<span class="t " style="top:362.5px;font-size:12px;line-height:16px;color:#fff;letter-spacing:-0.603px;left:1280.4px;">1.008</span>
<span class="t " style="top:362.5px;font-size:12px;line-height:16px;color:#fff;letter-spacing:-0.557px;left:1320px;">5.2.2021. 19:50:45</span>
<span class="t " style="top:362.5px;font-size:12px;line-height:16px;color:#fff;letter-spacing:0.592px;left:1470px;">rw-r--r--</span>
<span class="t " style="top:362.5px;font-size:12px;line-height:16px;color:#fff;letter-spacing:-0.672px;left:1550px;">1475</span>
<svg class="i" style="left:823px;top:381px;" width="16" height="16" viewBox="0 0 16 16"><path d="M3 1 H10.6 L13 3.4 V15 H3Z" fill="#2c1b63"/><path d="M10.4 1 V3.6 H13Z" fill="#a48ce0"/><circle cx="8" cy="9.2" r="4.1" fill="url(#gFox)"/><path d="M7.6 5.2 Q9 5 9.6 6 Q11.6 7 11.4 9 Q10.6 7.6 9 7.8 Q7.6 7 7.6 5.2Z" fill="#ffd35a"/><path d="M6.8 8.2 Q8.2 8 8.6 9.2 Q8.4 10.6 7 10.4 Q6 9.6 6.8 8.2Z" fill="#ff9a7a" opacity=".8"/></svg>
<span class="t " style="top:381.5px;font-size:12px;line-height:16px;color:#fff;letter-spacing:-0.224px;left:841px;">401.shtml</span>
<span class="t " style="top:381.5px;font-size:12px;line-height:16px;color:#fff;letter-spacing:-0.603px;left:1280.4px;">1.034</span>
<span class="t " style="top:381.5px;font-size:12px;line-height:16px;color:#fff;letter-spacing:-0.557px;left:1320px;">5.2.2021. 19:50:40</span>
<span class="t " style="top:381.5px;font-size:12px;line-height:16px;color:#fff;letter-spacing:0.592px;left:1470px;">rw-r--r--</span>
<span class="t " style="top:381.5px;font-size:12px;line-height:16px;color:#fff;letter-spacing:-0.672px;left:1550px;">1475</span>
<svg class="i" style="left:823px;top:400px;" width="16" height="16" viewBox="0 0 16 16"><path d="M3 1 H10.6 L13 3.4 V15 H3Z" fill="#2c1b63"/><path d="M10.4 1 V3.6 H13Z" fill="#a48ce0"/><circle cx="8" cy="9.2" r="4.1" fill="url(#gFox)"/><path d="M7.6 5.2 Q9 5 9.6 6 Q11.6 7 11.4 9 Q10.6 7.6 9 7.8 Q7.6 7 7.6 5.2Z" fill="#ffd35a"/><path d="M6.8 8.2 Q8.2 8 8.6 9.2 Q8.4 10.6 7 10.4 Q6 9.6 6.8 8.2Z" fill="#ff9a7a" opacity=".8"/></svg>
<span class="t " style="top:400.5px;font-size:12px;line-height:16px;color:#fff;letter-spacing:-0.224px;left:841px;">403.shtml</span>
<span class="t " style="top:400.5px;font-size:12px;line-height:16px;color:#fff;letter-spacing:-0.603px;left:1280.4px;">1.108</span>
<span class="t " style="top:400.5px;font-size:12px;line-height:16px;color:#fff;letter-spacing:-0.557px;left:1320px;">5.2.2021. 19:51:14</span>
<span class="t " style="top:400.5px;font-size:12px;line-height:16px;color:#fff;letter-spacing:0.592px;left:1470px;">rw-r--r--</span>
<span class="t " style="top:400.5px;font-size:12px;line-height:16px;color:#fff;letter-spacing:-0.672px;left:1550px;">1475</span>
<svg class="i" style="left:823px;top:419px;" width="16" height="16" viewBox="0 0 16 16"><path d="M3 1 H10.6 L13 3.4 V15 H3Z" fill="#2c1b63"/><path d="M10.4 1 V3.6 H13Z" fill="#a48ce0"/><circle cx="8" cy="9.2" r="4.1" fill="url(#gFox)"/><path d="M7.6 5.2 Q9 5 9.6 6 Q11.6 7 11.4 9 Q10.6 7.6 9 7.8 Q7.6 7 7.6 5.2Z" fill="#ffd35a"/><path d="M6.8 8.2 Q8.2 8 8.6 9.2 Q8.4 10.6 7 10.4 Q6 9.6 6.8 8.2Z" fill="#ff9a7a" opacity=".8"/></svg>
<span class="t " style="top:419.5px;font-size:12px;line-height:16px;color:#fff;letter-spacing:-0.224px;left:841px;">404.shtml</span>
<span class="t " style="top:419.5px;font-size:12px;line-height:16px;color:#fff;letter-spacing:-0.603px;left:1280.4px;">1.035</span>
<span class="t " style="top:419.5px;font-size:12px;line-height:16px;color:#fff;letter-spacing:-0.557px;left:1320px;">5.2.2021. 19:51:26</span>
<span class="t " style="top:419.5px;font-size:12px;line-height:16px;color:#fff;letter-spacing:0.592px;left:1470px;">rw-r--r--</span>
<span class="t " style="top:419.5px;font-size:12px;line-height:16px;color:#fff;letter-spacing:-0.672px;left:1550px;">1475</span>
<svg class="i" style="left:823px;top:438px;" width="16" height="16" viewBox="0 0 16 16"><path d="M3 1 H10.6 L13 3.4 V15 H3Z" fill="#2c1b63"/><path d="M10.4 1 V3.6 H13Z" fill="#a48ce0"/><circle cx="8" cy="9.2" r="4.1" fill="url(#gFox)"/><path d="M7.6 5.2 Q9 5 9.6 6 Q11.6 7 11.4 9 Q10.6 7.6 9 7.8 Q7.6 7 7.6 5.2Z" fill="#ffd35a"/><path d="M6.8 8.2 Q8.2 8 8.6 9.2 Q8.4 10.6 7 10.4 Q6 9.6 6.8 8.2Z" fill="#ff9a7a" opacity=".8"/></svg>
<span class="t " style="top:438.5px;font-size:12px;line-height:16px;color:#fff;letter-spacing:-0.224px;left:841px;">500.shtml</span>
<span class="t " style="top:438.5px;font-size:12px;line-height:16px;color:#fff;letter-spacing:-0.603px;left:1280.4px;">1.035</span>
<span class="t " style="top:438.5px;font-size:12px;line-height:16px;color:#fff;letter-spacing:-0.557px;left:1320px;">5.2.2021. 19:51:46</span>
<span class="t " style="top:438.5px;font-size:12px;line-height:16px;color:#fff;letter-spacing:0.592px;left:1470px;">rw-r--r--</span>
<span class="t " style="top:438.5px;font-size:12px;line-height:16px;color:#fff;letter-spacing:-0.672px;left:1550px;">1475</span>
<svg class="i" style="left:823px;top:457px;" width="16" height="16" viewBox="0 0 16 16"><rect x="1" y="1.2" width="11.4" height="14.4" fill="#fbfbfb"/><rect x="2.2" y="5.6" width="9" height="8.8" fill="url(#gGreenPad)"/><path d="M2.2 .4 V3 M4.4 .4 V3 M6.6 .4 V3 M8.8 .4 V3 M11 .4 V3" stroke="#333" stroke-width="1.1"/><path d="M13.6 1.6 L14.8 2.6 L9.6 11.2 L8 12.2 L8.3 10.3Z" fill="#f0a820" stroke="#c07810" stroke-width=".5"/><path d="M8 12.2 L8.2 11 L9 11.6Z" fill="#333"/></svg>
<span class="t " style="top:457.5px;font-size:12px;line-height:16px;color:#fff;letter-spacing:0.264px;left:841px;">config.php</span>
<span class="t " style="top:457.5px;font-size:12px;line-height:16px;color:#fff;letter-spacing:-0.425px;left:1280.58px;">1.118</span>
<span class="t " style="top:457.5px;font-size:12px;line-height:16px;color:#fff;letter-spacing:-0.563px;left:1320px;">26.1.2021. 22:29:47</span>
<span class="t " style="top:457.5px;font-size:12px;line-height:16px;color:#fff;letter-spacing:0.592px;left:1470px;">rw-r--r--</span>
<span class="t " style="top:457.5px;font-size:12px;line-height:16px;color:#fff;letter-spacing:-0.672px;left:1550px;">1475</span>
<svg class="i" style="left:823px;top:476px;" width="16" height="16" viewBox="0 0 16 16"><rect x="1" y="1.2" width="11.4" height="14.4" fill="#fbfbfb"/><rect x="2.2" y="5.6" width="9" height="8.8" fill="url(#gGreenPad)"/><path d="M2.2 .4 V3 M4.4 .4 V3 M6.6 .4 V3 M8.8 .4 V3 M11 .4 V3" stroke="#333" stroke-width="1.1"/><path d="M13.6 1.6 L14.8 2.6 L9.6 11.2 L8 12.2 L8.3 10.3Z" fill="#f0a820" stroke="#c07810" stroke-width=".5"/><path d="M8 12.2 L8.2 11 L9 11.6Z" fill="#333"/></svg>
<span class="t " style="top:476.5px;font-size:12px;line-height:16px;color:#fff;letter-spacing:0.265px;left:841px;">config-dist.php</span>
<span class="t " style="top:476.5px;font-size:12px;line-height:16px;color:#fff;letter-spacing:-0.672px;left:1301.33px;">0</span>
<span class="t " style="top:476.5px;font-size:12px;line-height:16px;color:#fff;letter-spacing:-0.563px;left:1320px;">20.7.2020. 18:29:34</span>
<span class="t " style="top:476.5px;font-size:12px;line-height:16px;color:#fff;letter-spacing:0.592px;left:1470px;">rw-r--r--</span>
<span class="t " style="top:476.5px;font-size:12px;line-height:16px;color:#fff;letter-spacing:-0.672px;left:1550px;">1475</span>
<svg class="i" style="left:823px;top:495px;" width="16" height="16" viewBox="0 0 16 16"><rect x="1" y="1.2" width="11.4" height="14.4" fill="#fbfbfb"/><rect x="2.2" y="5.6" width="9" height="8.8" fill="url(#gGreenPad)"/><path d="M2.2 .4 V3 M4.4 .4 V3 M6.6 .4 V3 M8.8 .4 V3 M11 .4 V3" stroke="#333" stroke-width="1.1"/><path d="M13.6 1.6 L14.8 2.6 L9.6 11.2 L8 12.2 L8.3 10.3Z" fill="#f0a820" stroke="#c07810" stroke-width=".5"/><path d="M8 12.2 L8.2 11 L9 11.6Z" fill="#333"/></svg>
<span class="t " style="top:495.5px;font-size:12px;line-height:16px;color:#fff;left:841px;">index.php</span>
<span class="t " style="top:495.5px;font-size:12px;line-height:16px;color:#fff;letter-spacing:-0.672px;left:1289.33px;">293</span>
<span class="t " style="top:495.5px;font-size:12px;line-height:16px;color:#fff;letter-spacing:-0.563px;left:1320px;">20.7.2020. 18:29:34</span>
<span class="t " style="top:495.5px;font-size:12px;line-height:16px;color:#fff;letter-spacing:0.592px;left:1470px;">rw-r--r--</span>
<span class="t " style="top:495.5px;font-size:12px;line-height:16px;color:#fff;letter-spacing:-0.672px;left:1550px;">1475</span>
<svg class="i" style="left:823px;top:514px;" width="16" height="16" viewBox="0 0 16 16"><path d="M2.6 .4 H12.6 L13.6 13.6 H1.6Z" fill="#deedfc" stroke="#3f6ea8" stroke-width=".7"/><path d="M2.6 .4 H12.6 V1.6 H2.6Z" fill="#5f96d8"/><path d="M1 13.6 H14.4 V15.6 H1.6Z" fill="#9cc4ee" stroke="#4a7ab8" stroke-width=".5"/><path d="M3.8 7.6 L5.6 3 L7.4 7.6 M4.5 6 H6.7" stroke="#e8843a" stroke-width="1.1" fill="none"/><path d="M8.6 3.6 H11.6 M8.6 5.8 H11.6 M4 9.4 H11.6 M4 11.4 H11.8" stroke="#44689c" stroke-width=".9"/></svg>
<span class="t " style="top:514.5px;font-size:12px;line-height:16px;color:#fff;letter-spacing:0.234px;left:841px;">php.ini</span>
<span class="t " style="top:514.5px;font-size:12px;line-height:16px;color:#fff;letter-spacing:-0.672px;left:1289.33px;">418</span>
<span class="t " style="top:514.5px;font-size:12px;line-height:16px;color:#fff;letter-spacing:-0.563px;left:1320px;">20.7.2020. 18:29:34</span>
<span class="t " style="top:514.5px;font-size:12px;line-height:16px;color:#fff;letter-spacing:0.592px;left:1470px;">rw-r--r--</span>
<span class="t " style="top:514.5px;font-size:12px;line-height:16px;color:#fff;letter-spacing:-0.672px;left:1550px;">1475</span>
<div style="left:0px;top:1034px;width:1857px;height:43px;background:#202020;"></div>
<div style="left:812px;top:1034px;width:5px;height:20px;background:#2b2b2b;"></div>
<span class="t " style="top:1037.5px;font-size:12px;line-height:16px;color:#f0f0f0;letter-spacing:-0.320px;left:2px;">0 B of 9,26 KB in 0 of 17</span>
<span class="t " style="top:1037.5px;font-size:12px;line-height:16px;color:#f0f0f0;letter-spacing:-0.378px;left:819.5px;">9,26 KB of 9,26 KB in 15 of 17</span>
<div style="left:0px;top:1054px;width:1857px;height:1px;background:#2c2c2c;"></div>
<div style="left:0px;top:1055px;width:1857px;height:1px;background:#343434;"></div>
<div style="left:-2px;top:1056.5px;width:1636px;height:20.5px;border:1px solid #3c3c3c;box-sizing:border-box"></div>
<div style="left:1637px;top:1056.5px;width:33px;height:20.5px;border:1px solid #3c3c3c;box-sizing:border-box"></div>
<div style="left:1672px;top:1056.5px;width:68px;height:20.5px;border:1px solid #3c3c3c;box-sizing:border-box"></div>
<div style="left:1742.5px;top:1056.5px;width:32.5px;height:20.5px;border:1px solid #3c3c3c;box-sizing:border-box"></div>
<div style="left:1777.5px;top:1056.5px;width:82.5px;height:20.5px;border:1px solid #3c3c3c;box-sizing:border-box"></div>
<svg class="i" style="left:1646px;top:1059px;" width="14" height="15" viewBox="0 0 16 16"><rect x="1.6" y="7" width="12.8" height="8.4" rx="1" fill="#6e6e6e"/><path d="M4.4 7 V4.8 Q4.4 1.4 8 1.4 Q11.6 1.4 11.6 4.8 V7" stroke="#6e6e6e" stroke-width="2" fill="none"/></svg>
<span class="t " style="top:1058.5px;font-size:12px;line-height:16px;color:#f0f0f0;letter-spacing:-1.219px;left:1696px;">FTP</span>
<svg class="i" style="left:1750px;top:1058.5px;" width="14" height="16" viewBox="0 0 16 16"><rect x="1" y=".6" width="10" height="9.4" fill="#7a7a7a"/><path d="M1 3.6 H11 M1 6.8 H11" stroke="#5a5a5a" stroke-width=".8"/><path d="M10 1 H13.4 V11 H10Z" fill="#8a8a8a"/><path d="M11.6 11 V13.4 M8.4 15 H14.8 M11.6 13.4 L9 15 M11.6 13.4 L14.2 15" stroke="#7a7a7a" stroke-width="1.2" fill="none"/></svg>
<span class="t " style="top:1058.5px;font-size:12px;line-height:16px;color:#f0f0f0;letter-spacing:-0.574px;left:1798px;">2:59:44</span>
<div style="left:209px;top:548px;width:375.5px;height:219px;background:#fff;"></div>
<div style="left:210px;top:549px;width:373.5px;height:217px;background:#2f5496;"></div>
<div style="left:217px;top:579px;width:360px;height:181px;background:#b9b990;"></div>
<span class="t " style="top:554.5px;font-size:15px;line-height:18px;color:#fff;letter-spacing:0.079px;left:336px;">11% Downloading</span>
<div style="left:505px;top:550px;width:26px;height:19px;background:#b9b990;"></div>
<div style="left:533px;top:550px;width:45px;height:19px;background:#b9b990;"></div>
<span class="t " style="top:550.5px;font-size:12px;line-height:16px;color:#000;left:514.664px;font-weight:bold;">?</span>
<span class="t " style="top:548.5px;font-size:14px;line-height:18px;color:#000;left:552px;font-weight:bold;transform:scaleX(1.2);">x</span>
<svg class="i" style="left:227px;top:590px;" width="30" height="32" viewBox="0 0 30 32"><path d="M10.4 .6 H22.4 L27.6 5.8 V22.6 H10.4Z" fill="#f6f9fd" stroke="#8fa4c4" stroke-width="1"/><path d="M22.4 .6 V5.8 H27.6Z" fill="#d4dcec"/><path d="M13.4 4.6 H21 M13.4 6.8 H21 M20 9 H25 M20 11.2 H25 M20 13.4 H25" stroke="#7f98bc" stroke-width="1.1"/><path d="M4.6 6.8 H16.2 L21.4 12 V27.6 H4.6Z" fill="#f4f8fd" stroke="#8098bc" stroke-width="1"/><path d="M16.2 6.8 V12 H21.4Z" fill="#c8d2ea"/><path d="M7.4 10.6 H14.6 M7.4 12.8 H14.6 M7.4 15 H18.6 M7.4 17.2 H18.6 M7.4 19.4 H18.6 M7.4 21.6 H18.6 M7.4 23.8 H18.6" stroke="#6f8cb4" stroke-width="1.1"/><path d="M.6 10.6 H4.6 V27.6 H12 V31.4 H.6Z" fill="#eef4fc" stroke="#7a94b8" stroke-width="1"/><path d="M2 14 H4 M2 16.2 H4 M2 18.4 H4 M2 20.6 H4 M2 22.8 H4 M2 25 H4 M2 27.2 H4" stroke="#6f8cb4" stroke-width="1"/><path d="M12 17.8 L12 31 L25.6 31 L21.4 26.6 L28.8 19.2 L24 14.4 L16.6 21.8 Z" fill="url(#gArrow)" stroke="#2a8a22" stroke-width=".9" stroke-linejoin="round"/></svg>
<span class="t ta" style="top:593.7px;font-size:11px;line-height:14px;color:#000;letter-spacing:0.237px;left:266.5px;">File:</span>
<span class="t ta" style="top:593.7px;font-size:11px;line-height:14px;color:#000;letter-spacing:-0.203px;left:322.5px;">account</span>
<span class="t ta" style="top:609.7px;font-size:11px;line-height:14px;color:#000;letter-spacing:0.181px;left:266.5px;">Target:</span>
<span class="t ta" style="top:609.7px;font-size:11px;line-height:14px;color:#000;letter-spacing:0.086px;left:322.5px;">C:\...\online-prodaja SUBDOMAIN\</span>
<div style="left:266.5px;top:628px;width:302px;height:16px;background:#000;"></div>
<div style="left:267.5px;top:629px;width:300px;height:14px;background:#dbd5d0;"></div>
<div style="left:267.5px;top:629px;width:32.5px;height:14px;background:#0a246a;"></div>
<span class="t ta" style="top:656.7px;font-size:11px;line-height:14px;color:#000;letter-spacing:-0.180px;left:266.5px;">Start time:</span>
<span class="t ta" style="top:656.7px;font-size:11px;line-height:14px;color:#000;letter-spacing:-0.020px;left:381.48px;">0:31:29</span>
<span class="t ta" style="top:656.7px;font-size:11px;line-height:14px;color:#000;letter-spacing:-0.260px;left:431.5px;">Time elapsed:</span>
<span class="t ta" style="top:656.7px;font-size:11px;line-height:14px;color:#000;letter-spacing:-0.020px;left:530.98px;">0:08:17</span>
<span class="t ta" style="top:672.7px;font-size:11px;line-height:14px;color:#000;letter-spacing:-0.019px;left:266.5px;">Bytes transferred:</span>
<span class="t ta" style="top:672.7px;font-size:11px;line-height:14px;color:#000;letter-spacing:-0.359px;left:381.141px;">22,5 MB</span>
<span class="t ta" style="top:672.7px;font-size:11px;line-height:14px;color:#000;letter-spacing:-0.143px;left:431.5px;">Speed:</span>
<span class="t ta" style="top:672.7px;font-size:11px;line-height:14px;color:#000;letter-spacing:-0.104px;left:522.896px;">33,3 KB/s</span>
<div style="left:266.5px;top:691px;width:302px;height:16px;background:#000;"></div>
<div style="left:267.5px;top:692px;width:300px;height:14px;background:#dbd5d0;"></div>
<svg class="i" style="left:272px;top:726px;" width="16" height="16" viewBox="0 0 16 16"><path d="M1 3.8 L3.8 1 L8 5.2 L12.2 1 L15 3.8 L10.8 8 L15 12.2 L12.2 15 L8 10.8 L3.8 15 L1 12.2 L5.2 8Z" fill="#cc1c1c"/></svg>
<svg class="i" style="left:295px;top:726.5px;" width="16" height="16" viewBox="0 0 16 16"><path d="M1 1 H7 L9 3 V12 H1Z" fill="#eef3fb" stroke="#8aa8d8" stroke-width=".8"/><path d="M2.4 4 H7 M2.4 6 H7 M2.4 8 H7" stroke="#8aa8d8" stroke-width=".8"/><path d="M6 6.4 L12.6 10.8 L6 15.2Z" fill="#2faa3a"/><rect x="13" y="6.4" width="2.4" height="8.8" fill="#2faa3a"/></svg>
<div style="left:322px;top:738px;width:8px;height:2px;background:#000;"></div>
<svg class="i" style="left:341px;top:726.5px;" width="16" height="16" viewBox="0 0 16 16"><path d="M6.4 .4 H11.6 L14.4 3.2 V10 H6.4Z" fill="#f0f5fc" stroke="#7f98c0" stroke-width=".7"/><path d="M3.4 2.6 H8.8 L11.4 5.2 V12.4 H3.4Z" fill="#f0f5fc" stroke="#7f98c0" stroke-width=".7"/><path d="M.6 5 H5.8 L8 7.2 V15.4 H.6Z" fill="#eef4fc" stroke="#7f98c0" stroke-width=".7"/><path d="M2 8.4 H6.4 M2 10.4 H6.4 M2 12.4 H6.4 M5 4.6 H8 M8 2.6 H10.6" stroke="#7f9ac4" stroke-width=".8"/><path d="M7.6 9 L7.6 15.4 L14 15.4 L11.9 13.3 L15.4 9.8 L13.2 7.6 L9.7 11.1Z" fill="url(#gArrow)" stroke="#1f8a22" stroke-width=".6" stroke-linejoin="round"/></svg>
<svg class="i" style="left:364px;top:725.5px;" width="16" height="16" viewBox="0 0 16 16"><circle cx="6.4" cy="6" r="5.4" fill="#3b7be0"/><path d="M3.6 6 L5.8 8.4 L9.6 3.4" stroke="#fff" stroke-width="1.7" fill="none"/><circle cx="11.8" cy="11.8" r="3.6" fill="#3cc048" stroke="#1f8a2c" stroke-width=".6"/></svg>
<svg class="i" style="left:386px;top:732.8px" width="6" height="3.4"><path d="M0 0H6L3 3.4Z" fill="#ececd8"/></svg>
<div style="left:397px;top:724px;width:108px;height:21px;background:#404040;"></div>
<div style="left:493.5px;top:725px;width:10.5px;height:19px;background:#b9b990;"></div>
<svg class="i" style="left:399.5px;top:726.5px;" width="15" height="15" viewBox="0 0 16 16"><circle cx="8" cy="8.4" r="6.8" fill="#f3ece4" stroke="#d8c8b8" stroke-width=".8"/><path d="M2.2 6 A6.4 6.4 0 0 1 14.2 7" stroke="#e8783a" stroke-width="1.6" fill="none"/><path d="M8.6 9 L4.6 5" stroke="#333" stroke-width="1.3"/><circle cx="8.6" cy="9" r="1.1" fill="#333"/></svg>
<svg class="i" style="left:495.5px;top:733.3px" width="6" height="3.4"><path d="M0 0H6L3 3.4Z" fill="#fff"/></svg>
<span class="t ta" style="top:727.5px;font-size:11px;line-height:14px;color:#fff;letter-spacing:0.370px;left:416.5px;">Unlimited</span>
<svg class="i" style="left:0;top:0" width="1857" height="1077"><ellipse cx="402.5" cy="673" rx="227.8" ry="144.3" fill="none" stroke="#ed1c24" stroke-width="5"/><path d="M606 746 L690 787" stroke="#ed1c24" stroke-width="5" stroke-linecap="round"/><text x="690" y="820.5" font-family="Liberation Sans, sans-serif" font-size="42.5" fill="#ed1c24" textLength="265" lengthAdjust="spacingAndGlyphs">system colors</text></svg>
</body></html>
